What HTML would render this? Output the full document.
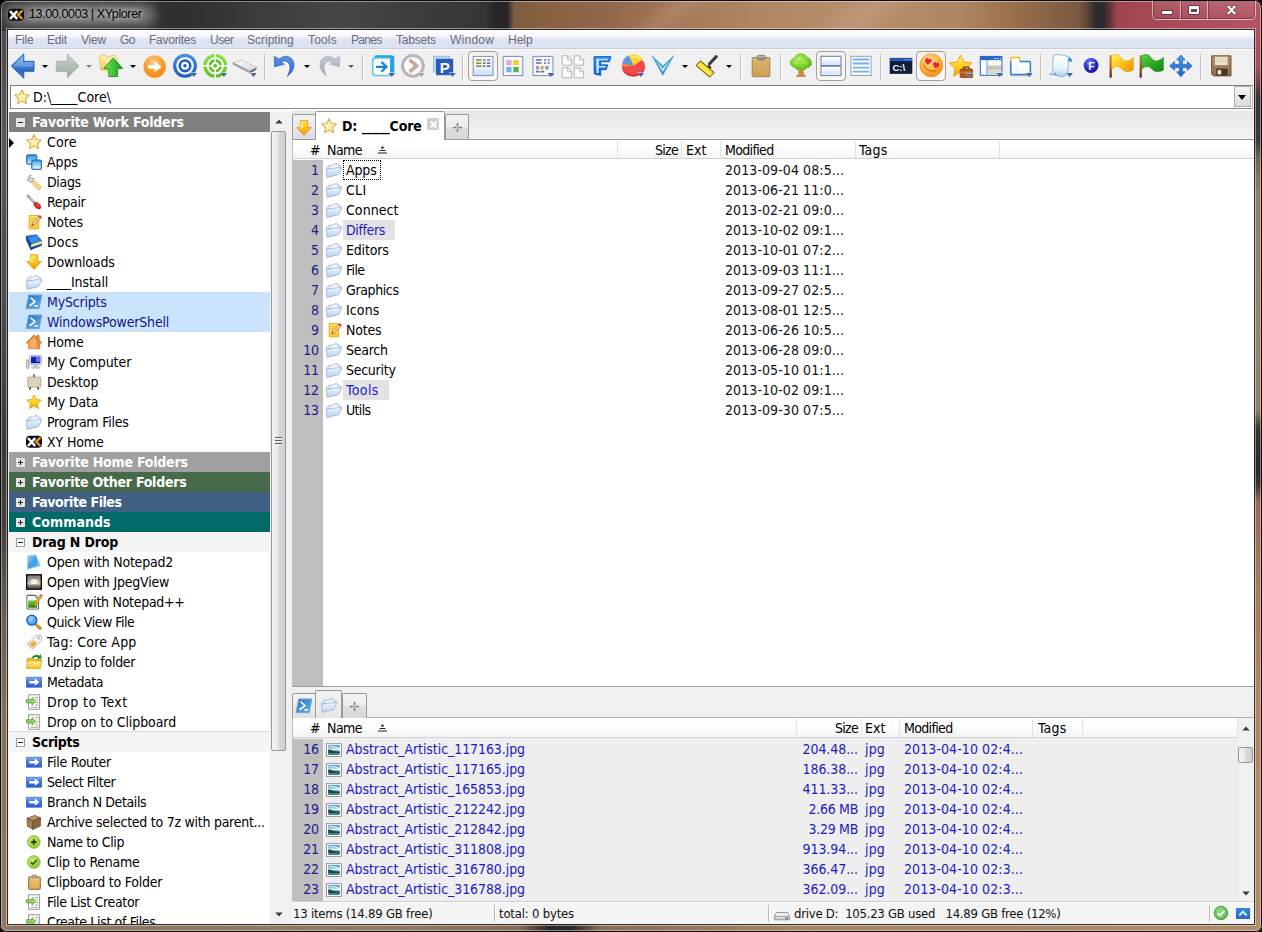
<!DOCTYPE html>
<html lang="en"><head><meta charset="utf-8"><title>13.00.0003 | XYplorer</title>
<style>
*{box-sizing:border-box}
html,body{margin:0;padding:0;background:#000;overflow:hidden}
body{width:1262px;height:932px;position:relative;font-family:'DejaVu Sans Condensed','Liberation Sans',sans-serif;font-size:14px;color:#000;line-height:20px;letter-spacing:-0.1px}
.a{position:absolute}
.t{position:absolute;white-space:pre;height:20px;line-height:20px}
svg{position:absolute;overflow:visible}
#frame{left:0;top:0;width:1262px;height:932px;border-radius:8px 8px 7px 7px;overflow:hidden;background:#444}
#ftop{left:0;top:0;width:1262px;height:31px;background:linear-gradient(90deg,#343336 0,#3b393d 60px,#2f2e31 180px,#3e3b40 260px,#48454a 340px,#3c3a3e 430px,#363538 485px,#272527 495px,#262426 507px,#7c5c44 514px,#86603f 540px,#90664a 600px,#a47858 680px,#b08664 760px,#b68e6c 860px,#ae8664 960px,#a07450 1000px,#8c6646 1040px,#7c5840 1078px,#5a4236 1088px,#2c2a2e 1096px,#2c2a2e 1104px,#6a343c 1111px,#a04450 1117px,#a84c59 1180px,#b35663 1262px)}
#fleft{left:0;top:26px;width:9px;height:906px;background:linear-gradient(180deg,#4e4c50 0,#58565a 120px,#4a484b 300px,#3a3839 420px,#46403c 500px,#6c6054 600px,#847260 700px,#8c7864 906px)}
#fright{left:1253px;top:26px;width:9px;height:906px;background:linear-gradient(180deg,#ad5360 0,#a54f5b 40px,#6a4248 58px,#3a3638 70px,#3c3a3a 115px,#6f6752 132px,#8a8064 165px,#93876a 300px,#8c7f63 385px,#3a3633 402px,#2a2828 440px,#3a302c 458px,#946c54 476px,#a47c60 560px,#ae8868 700px,#b08c6c 906px)}
#fbot{left:0;top:923px;width:1262px;height:9px;background:linear-gradient(90deg,#8c7864 0,#8e7862 200px,#947a62 400px,#866a54 520px,#2e2826 548px,#2e2826 572px,#8a6c56 600px,#a48264 800px,#b08c6c 1262px)}
#client{left:8px;top:30px;width:1246px;height:894px;background:#f0f0f0;overflow:hidden}
.hl{position:absolute;background:#808080}
.row{position:absolute;left:0;height:20px;width:100%}
.hd{position:absolute;left:1px;width:261px;height:20px;font-weight:bold;color:#fff}
.hd .t{left:23px;top:0}
.pm{position:absolute;left:7px;top:6px;width:9px;height:9px;background:#e4e4e4;background-image:linear-gradient(180deg,rgba(0,0,0,.08),rgba(255,255,255,.5))}
.pm:before{content:"";position:absolute;left:2px;top:4px;width:5px;height:1px;background:#222}
.pm.p:after{content:"";position:absolute;left:4px;top:2px;width:1px;height:5px;background:#222}
.num{position:absolute;left:0;width:26px;text-align:right;color:#1c1c8c;height:20px}
.mi{position:absolute;top:1px;height:19px;line-height:19px;font-family:'Liberation Sans',sans-serif;font-size:12px;color:#676d79;letter-spacing:-0.2px;white-space:pre}
.sep{position:absolute;top:24px;width:1px;height:26px;background:#c2c2c2;box-shadow:1px 0 0 #fdfdfd}
.dd{position:absolute;top:35px;width:0;height:0;border-left:3px solid transparent;border-right:3px solid transparent;border-top:3px solid #000}
.colsep{position:absolute;top:1px;width:1px;height:18px;background:#e2e2e2}
.ch{position:absolute;left:0;height:20px;background:linear-gradient(180deg,#fff 0,#fff 35%,#f2f3f5 100%);border-bottom:1px solid #d2d2d2}
.tab{position:absolute;border:1px solid #999;border-bottom:none;border-radius:2px 2px 0 0}
.st{position:absolute;top:0;height:21px;line-height:21px;font-size:13px;white-space:pre;color:#111;letter-spacing:0}
</style></head><body>
<div class="a" id="frame">
<div class="a" id="fleft"></div><div class="a" id="fright"></div><div class="a" id="fbot"></div><div class="a" id="ftop"></div>
<div class="a" style="left:520px;top:0;width:560px;height:30px;overflow:hidden;opacity:.5"><div class="a" style="left:120px;top:-30px;width:60px;height:90px;transform:skewX(-55deg);background:linear-gradient(90deg,rgba(255,235,215,0),rgba(255,235,215,.22),rgba(255,235,215,0))"></div><div class="a" style="left:300px;top:-30px;width:90px;height:90px;transform:skewX(-55deg);background:linear-gradient(90deg,rgba(255,235,215,0),rgba(255,235,215,.2),rgba(255,235,215,0))"></div></div>
<div class="a" style="left:0;top:0;width:1262px;height:932px;border-radius:8px 8px 7px 7px;border:1px solid #0c0c0c;"></div>
<div class="a" style="left:1px;top:1px;width:1260px;height:930px;border-radius:7px 7px 6px 6px;border:1px solid rgba(255,255,255,.42);"></div>
<div class="a" style="left:6px;top:28px;width:1250px;height:898px;border:1px solid rgba(255,255,255,.45)"></div>
<div class="a" style="left:7px;top:29px;width:1248px;height:896px;border:1px solid rgba(20,20,20,.75)"></div>
<div class="a" style="left:4px;top:4px;width:152px;height:22px;border-radius:11px;background:rgba(255,255,255,.30);filter:blur(5px)"></div>
<svg style="left:8px;top:7px" width="16" height="16" viewBox="0 0 16 16"><path d="M4 1.800h8a4 4 0 0 1 4 4v3.900a4 4 0 0 1-4 4H4a4 4 0 0 1-4-4V5.800a4 4 0 0 1 4-4z" fill="#0a0a0a"/><path d="M2 4l7.200 8M9.200 4L2 12" stroke="#fff" stroke-width="2.600"/><path d="M14.400 3.600L10 7.800l4.400 4" stroke="#e8981c" stroke-width="2.300" fill="none"/></svg>
<div class="t" style="left:29px;top:4px;font-family:'Liberation Sans',sans-serif;font-size:12.5px;letter-spacing:-0.379px;text-shadow:0 0 6px rgba(255,255,255,.9),0 0 10px rgba(255,255,255,.6)">13.00.0003 | XYplorer</div>
<div class="a" style="left:1152px;top:1px;width:104px;height:19px;border:1px solid rgba(255,255,255,.55);border-top:none;border-radius:0 0 5px 5px;box-shadow:inset 0 0 0 1px rgba(60,10,20,.35);background:linear-gradient(180deg,rgba(255,255,255,.12),rgba(255,255,255,.02))"></div>
<div class="a" style="left:1180px;top:1px;width:1px;height:18px;background:rgba(255,255,255,.5);box-shadow:1px 0 0 rgba(60,10,20,.35)"></div>
<div class="a" style="left:1207px;top:1px;width:1px;height:18px;background:rgba(255,255,255,.5);box-shadow:1px 0 0 rgba(60,10,20,.35)"></div>
<div class="a" style="left:1162px;top:11px;width:10px;height:3px;background:#fff;border-radius:1px;box-shadow:0 0 0 1px rgba(70,30,40,.6)"></div>
<div class="a" style="left:1189px;top:6px;width:10px;height:8px;border:2px solid #fff;border-top-width:3px;border-radius:1px;background:rgba(90,50,60,.7);box-shadow:0 0 0 1px rgba(70,30,40,.6)"></div>
<svg style="left:1225px;top:5px" width="13" height="10" viewBox="0 0 13 10"><path d="M.8 .5h3.600l2.100 2.600L8.600 .5h3.600L8.300 5l3.900 4.500H8.600L6.500 6.900 4.400 9.500H.8L4.700 5z" fill="#fff" stroke="rgba(70,30,40,.7)" stroke-width=".8"/></svg>
</div>
<div class="a" id="client">
<div class="a" style="left:0;top:0;width:1246px;height:19px;background:linear-gradient(180deg,#fefefe 0,#f4f5fa 36%,#e2e5f3 46%,#dcdff0 100%)"></div>
<div class="a" style="left:0;top:18px;width:1246px;height:1px;background:#c9cdd9"></div>
<div class="a" style="left:0;top:19px;width:1246px;height:1px;background:#fbfbfb"></div>
<div class="mi" style="left:7px;letter-spacing:-0.211px;">File</div>
<div class="mi" style="left:39px;letter-spacing:-0.172px;">Edit</div>
<div class="mi" style="left:73px;letter-spacing:-0.199px;">View</div>
<div class="mi" style="left:112px;letter-spacing:-0.508px;">Go</div>
<div class="mi" style="left:141px;letter-spacing:-0.262px;">Favorites</div>
<div class="mi" style="left:202px;letter-spacing:-0.461px;">User</div>
<div class="mi" style="left:239px;letter-spacing:0.001px;">Scripting</div>
<div class="mi" style="left:300px;letter-spacing:0.157px;">Tools</div>
<div class="mi" style="left:343px;letter-spacing:-0.666px;">Panes</div>
<div class="mi" style="left:388px;letter-spacing:-0.208px;">Tabsets</div>
<div class="mi" style="left:442px;letter-spacing:0.252px;">Window</div>
<div class="mi" style="left:500px;letter-spacing:0.003px;">Help</div>
<div class="a" style="left:460px;top:21px;width:30px;height:30px;border:1px solid #a8a098;border-radius:4px;background:linear-gradient(180deg,#f3f1ed,#f8f7f4)"></div><div class="a" style="left:808px;top:21px;width:30px;height:30px;border:1px solid #a8a098;border-radius:4px;background:linear-gradient(180deg,#f3f1ed,#f8f7f4)"></div><div class="a" style="left:908px;top:21px;width:30px;height:30px;border:1px solid #a8a098;border-radius:4px;background:linear-gradient(180deg,#f3f1ed,#f8f7f4)"></div><svg style="left:3px;top:24px" width="24" height="24" viewBox="0 0 24 24"><linearGradient id="g3" x1="0" y1="0" x2="0" y2="1"><stop offset="0" stop-color="#7ab4f0"/><stop offset="0.35" stop-color="#4a8ce0"/><stop offset="0.7" stop-color="#2a68c4"/><stop offset="1" stop-color="#3a7cd4"/></linearGradient><path d="M12.800 -.2L.3 11.900 12.800 24.200V17.300H23V7.300H12.800z" fill="url(#g3)" stroke="#1c4c9c" stroke-width=".8" stroke-linejoin="round"/><path d="M12 2.300L2.200 11.800l1 .9H22V8.200H12z" fill="#fff" opacity=".22"/></svg><svg style="left:48px;top:24px" width="24" height="24" viewBox="0 0 24 24"><linearGradient id="g5" x1="0" y1="0" x2="0" y2="1"><stop offset="0" stop-color="#d0d8d0"/><stop offset="0.5" stop-color="#b2beb4"/><stop offset="1" stop-color="#9aa69c"/></linearGradient><path d="M11.400 .2L23 12 11.400 23.800V17.300H.3V7.300H11.400z" fill="url(#g5)" stroke="#9ca89e" stroke-width=".8" stroke-linejoin="round"/></svg><svg style="left:91px;top:24px" width="24" height="24" viewBox="0 0 24 24"><linearGradient id="g7" x1="0" y1="0" x2="0" y2="1"><stop offset="0" stop-color="#fdf0a0"/><stop offset="1" stop-color="#ecc858"/></linearGradient><linearGradient id="g8" x1="0" y1="0" x2="1" y2="0"><stop offset="0" stop-color="#8ce468"/><stop offset="0.45" stop-color="#48c838"/><stop offset="1" stop-color="#189818"/></linearGradient><path d="M.5 3l1.500-2.500L7 1.500l1.200 1.800 6.800-2 3.600 3.500L17 17.500 1.800 16z" fill="url(#g7)" stroke="#dcc060" stroke-width=".8" stroke-linejoin="round"/><path d="M2.500 5.500L14 2.500l3 2.800L15.500 14z" fill="#fff8c8" opacity=".55"/><path d="M14.200 4L4.700 14.500h5.100V22.500h8.800V14.500h5.100z" fill="url(#g8)" stroke="#1c8c1c" stroke-width=".9" stroke-linejoin="round"/></svg><svg style="left:135px;top:24px" width="24" height="24" viewBox="0 0 24 24"><radialGradient id="g9" cx="0.45" cy="0.3" r="0.8"><stop offset="0" stop-color="#ffcc88"/><stop offset="0.55" stop-color="#fa9a28"/><stop offset="1" stop-color="#ee7e0c"/></radialGradient><circle cx="11.700" cy="12.700" r="11" fill="url(#g9)" stroke="#f4a850" stroke-width=".7"/><path d="M5 10.900h6.500V7.200l7 5.500-7 5.500v-3.700H5z" fill="#fff"/></svg><svg style="left:165px;top:24px" width="24" height="24" viewBox="0 0 24 24"><linearGradient id="g11" x1="0" y1="0" x2="0" y2="1"><stop offset="0" stop-color="#4a8ce0"/><stop offset="1" stop-color="#1f5fc0"/></linearGradient><circle cx="12" cy="11.800" r="10.400" fill="#fff" stroke="url(#g11)" stroke-width="3.200"/><circle cx="12" cy="11.800" r="5.300" fill="#fff" stroke="#1f5fc0" stroke-width="2.600"/><circle cx="12" cy="11.800" r="1.700" fill="#1f5fc0"/><path d="M17.099999999999998 18.6h7.400l-3.700 4.400z" fill="#f4f4f4"/><path d="M17.5 19h6.600l-3.300 3.900z" fill="#46669c"/></svg><svg style="left:195px;top:24px" width="24" height="24" viewBox="0 0 24 24"><linearGradient id="g13" x1="0" y1="0" x2="0" y2="1"><stop offset="0" stop-color="#90e050"/><stop offset="1" stop-color="#5cc028"/></linearGradient><circle cx="12.200" cy="11.800" r="10.300" fill="#fff" stroke="url(#g13)" stroke-width="3.400"/><circle cx="12.200" cy="11.800" r="5.300" fill="#fff" stroke="#5cc028" stroke-width="2.800"/><path d="M12.200 -.5v24.600M-.2 11.800h24.800" stroke="#fff" stroke-width="1.500"/><circle cx="12.200" cy="11.800" r="1.900" fill="#5cc028"/><path d="M17.099999999999998 18.6h7.400l-3.700 4.400z" fill="#f4f4f4"/><path d="M17.5 19h6.600l-3.300 3.900z" fill="#46669c"/></svg><svg style="left:225px;top:24px" width="24" height="24" viewBox="0 0 24 24"><linearGradient id="g15" x1="0" y1="0" x2="0" y2="1"><stop offset="0" stop-color="#fafafa"/><stop offset="1" stop-color="#d4d6d8"/></linearGradient><path d="M0 8.800L8.500 6 23.500 13.500 16.500 17.200z" fill="url(#g15)" stroke="#b4b8bc" stroke-width=".7" stroke-linejoin="round"/><path d="M0 8.800l16.500 8.400 7-3.700v1.600l-7 3.900L0 10.300z" fill="#9ca0a6" stroke="#8c9096" stroke-width=".5" stroke-linejoin="round"/><path d="M17.300 18.300l5.400-3" stroke="#4a4e54" stroke-width="1.100"/><path d="M16.799999999999997 18.6h7.400l-3.700 4.400z" fill="#f4f4f4"/><path d="M17.2 19h6.600l-3.300 3.900z" fill="#46669c"/></svg><svg style="left:265px;top:24px" width="24" height="24" viewBox="0 0 24 24"><linearGradient id="g17" x1="0" y1="0" x2="0" y2="1"><stop offset="0" stop-color="#5a94e8"/><stop offset="1" stop-color="#2c60c4"/></linearGradient><path d="M1.200 2.200l.3 10.600 10-2.600-3.400-2c2.600-2 6.400-1.200 8 1.800 1.700 3.400.6 7.600-1.800 12.200 5-3.600 7.800-8.600 6.400-13.800C19 2.400 12.200 0 6.200 5z" fill="url(#g17)" stroke="#2c5cb8" stroke-width=".6" stroke-linejoin="round"/></svg><svg style="left:309px;top:24px" width="24" height="24" viewBox="0 0 24 24"><linearGradient id="g19" x1="0" y1="0" x2="0" y2="1"><stop offset="0" stop-color="#c4c8d2"/><stop offset="1" stop-color="#a0a6b2"/></linearGradient><path d="M22.800 2.200l-.3 10.600-10-2.600 3.400-2c-2.600-2-6.400-1.200-8 1.800-1.700 3.400-.6 7.600 1.800 11.800-5-3.400-7.800-8.200-6.400-13.400C5 2.400 11.800 0 17.800 5z" fill="url(#g19)" stroke="#a2a8b4" stroke-width=".6" stroke-linejoin="round"/></svg><svg style="left:363px;top:24px" width="24" height="24" viewBox="0 0 24 24"><path d="M4.500 1.300h15.800a3 3 0 0 1 3 3v14.200l-3 2.500V4.800H2z" fill="#1ea2e0"/><rect x="1.700" y="4" width="18.600" height="17.600" rx="3" fill="#fff" stroke="#5cc4ee" stroke-width="1.500"/><path d="M20.300 5v15" stroke="#1ea2e0" stroke-width="2.400"/><path d="M5 12.800h9M10.500 8l5 4.800-5 4.800" fill="none" stroke="#1c84d4" stroke-width="2.300"/><path d="M17.0 18.6h7.400l-3.700 4.400z" fill="#f4f4f4"/><path d="M17.400000000000002 19h6.600l-3.300 3.900z" fill="#46669c"/></svg><svg style="left:393px;top:24px" width="24" height="24" viewBox="0 0 24 24"><circle cx="11.900" cy="11.800" r="10.400" fill="#fbfbfb" stroke="#b6b6ba" stroke-width="3"/><path d="M8.600 5.800l7 6-7 6" fill="none" stroke="#c8a898" stroke-width="3.600"/><path d="M16.799999999999997 18.6h7.400l-3.700 4.400z" fill="#f4f4f4"/><path d="M17.2 19h6.600l-3.300 3.900z" fill="#a4a4a8"/></svg><svg style="left:424px;top:24px" width="24" height="24" viewBox="0 0 24 24"><rect x="1.600" y="2.200" width="15.800" height="15.800" fill="#bcd6f6" stroke="#8eb2e2" stroke-width=".8"/><rect x="4" y="4.800" width="17.200" height="16.400" fill="#2a5abc"/><text x="12.600" y="19" font-family="Liberation Sans,sans-serif" font-weight="bold" font-size="15" fill="#fff" text-anchor="middle">P</text><path d="M16.799999999999997 18.6h7.400l-3.700 4.400z" fill="#f4f4f4"/><path d="M17.2 19h6.600l-3.300 3.900z" fill="#46669c"/></svg><svg style="left:463px;top:24px" width="24" height="24" viewBox="0 0 24 24"><linearGradient id="g27" x1="0" y1="0" x2="0" y2="1"><stop offset="0" stop-color="#ffffff"/><stop offset="0.5" stop-color="#f0f5fd"/><stop offset="1" stop-color="#c8dcfa"/></linearGradient><rect x="2.200" y="2.400" width="19.800" height="19.200" fill="url(#g27)" stroke="#7a90b8" stroke-width="1"/><path d="M5 6h5.600" stroke="#8c9a34" stroke-width="1.700"/><path d="M12 6h2.600M16 6h3.400" stroke="#6a78a8" stroke-width="1.700"/><path d="M5 9.2h5.600" stroke="#8c9a34" stroke-width="1.700"/><path d="M12 9.2h2.600M16 9.2h3.400" stroke="#6a78a8" stroke-width="1.700"/><path d="M5 12.2h5.600" stroke="#8c9a34" stroke-width="1.700"/><path d="M12 12.2h2.600M16 12.2h3.400" stroke="#6a78a8" stroke-width="1.700"/></svg><svg style="left:493px;top:24px" width="24" height="24" viewBox="0 0 24 24"><rect x="2.200" y="2.400" width="19.600" height="19.200" fill="#f2f6fd" stroke="#7a90b8" stroke-width="1"/><rect x="5.300" y="6" width="5.200" height="5.200" fill="#e2a8d8"/><rect x="12.400" y="6" width="5.200" height="5.200" fill="#f0d020"/><rect x="5.300" y="13" width="5.200" height="5.200" fill="#78b0e8"/><rect x="12.400" y="13" width="5.200" height="5.200" fill="#58b040"/></svg><svg style="left:523px;top:24px" width="24" height="24" viewBox="0 0 24 24"><rect x="2" y="2.400" width="20" height="19.200" fill="#f4f7fd" stroke="#7a90b8" stroke-width="1"/><path d="M5 6h5.600M13 6h2M16.600 6h2" stroke="#6a7098" stroke-width="1.600"/><path d="M5 9h5.600M13 9h2M16.600 9h2" stroke="#6a7098" stroke-width="1.600"/><rect x="5" y="12" width="3" height="3.400" fill="#a48cd0"/><rect x="9.600" y="12" width="3" height="3.400" fill="#c8b040"/><rect x="14.200" y="12" width="3.400" height="3.400" fill="#8a9c8c"/><path d="M5 17.600h3.600M9.600 17.600h3.600" stroke="#6a7098" stroke-width="1.600"/><path d="M16.2 18.6h7.400l-3.700 4.400z" fill="#f4f4f4"/><path d="M16.6 19h6.600l-3.300 3.900z" fill="#46669c"/></svg><svg style="left:553px;top:24px" width="24" height="24" viewBox="0 0 24 24"><path d="M1.2 1.8h5.400l4 4v5.4h-9.400z" fill="#fdfdfd" stroke="#adadad" stroke-width=".9"/><path d="M6.6000000000000005 1.8v4h4" fill="none" stroke="#adadad" stroke-width=".8"/><path d="M13.2 1.8h5.400l4 4v5.4h-9.400z" fill="#fdfdfd" stroke="#adadad" stroke-width=".9"/><path d="M18.6 1.8v4h4" fill="none" stroke="#adadad" stroke-width=".8"/><path d="M1.2 13.8h5.400l4 4v6h-9.400z" fill="#fdfdfd" stroke="#adadad" stroke-width=".9"/><path d="M6.6000000000000005 13.8v4h4" fill="none" stroke="#adadad" stroke-width=".8"/><path d="M13.2 13.8h5.400l4 4v6h-9.400z" fill="#fdfdfd" stroke="#adadad" stroke-width=".9"/><path d="M18.6 13.8v4h4" fill="none" stroke="#adadad" stroke-width=".8"/></svg><svg style="left:583px;top:24px" width="24" height="24" viewBox="0 0 24 24"><linearGradient id="g35" x1="0" y1="0" x2="0" y2="1"><stop offset="0" stop-color="#2c8cf0"/><stop offset="1" stop-color="#0c5cc8"/></linearGradient><path d="M3 2.500h17l-1.600 5.300H9.800v3h7l-1.600 5H9.800v5.600L3.200 20z" fill="url(#g35)" stroke="#0c58c0" stroke-width=".8" stroke-linejoin="round"/><path d="M5.200 4.700h12l-.6 1.600H7.800v13l-2.400-.4z" fill="#d4f4ff" opacity=".9"/><path d="M7.800 12h7.200l-.5 1.500H7.800z" fill="#d4f4ff" opacity=".9"/></svg><svg style="left:613px;top:24px" width="24" height="24" viewBox="0 0 24 24"><ellipse cx="12.500" cy="13.500" rx="11.300" ry="9.200" fill="#d82c2c"/><ellipse cx="12.500" cy="11.800" rx="11.300" ry="9.200" fill="#f24848"/><path d="M12.500 11.800L1.500 9.500C2 5 5 2.500 8 1.800z" fill="#5a98e0"/><path d="M12.500 11.800L8 1.800C12-.5 19 .2 22 5.500z" fill="#f8d830"/><path d="M12.500 11.800L1.300 12.800 1.500 9.500z" fill="#f09038"/><path d="M10 3.500c3-1.200 7-.8 9.500 1.500" stroke="#fff6a0" stroke-width="1.200" fill="none" opacity=".7"/><path d="M16.2 18.6h7.400l-3.700 4.400z" fill="#f4f4f4"/><path d="M16.6 19h6.600l-3.300 3.900z" fill="#46669c"/></svg><svg style="left:643px;top:24px" width="24" height="24" viewBox="0 0 24 24"><linearGradient id="g39" x1="0" y1="0" x2="0" y2="1"><stop offset="0" stop-color="#4cc0e0"/><stop offset="1" stop-color="#2c88c8"/></linearGradient><path d="M1 1.800l10.800 19.400L22.600 1.800 11.800 12z" fill="url(#g39)" stroke="#3ca0d0" stroke-width=".7" stroke-linejoin="round"/><path d="M5.500 7.500l6.300 10.500 6.300-10.500-6.300 7z" fill="#e8fbff" opacity=".85"/></svg><svg style="left:687px;top:24px" width="24" height="24" viewBox="0 0 24 24"><path d="M14.500 9.800l6.800-7.200" stroke="#3a3a3c" stroke-width="3" stroke-linecap="round"/><path d="M12.800 11.500l3.200 2.600" stroke="#3a3a3c" stroke-width="2.200"/><path d="M1 11.500l4.600-4.600L19.200 18.500l-4.600 4.600z" fill="#f2d414" stroke="#544a10" stroke-width="1" stroke-linejoin="round"/><path d="M3 11.300l2-2 12 10.200-2 2z" fill="#fff27a" opacity=".75"/></svg><svg style="left:741px;top:24px" width="24" height="24" viewBox="0 0 24 24"><linearGradient id="g43" x1="0" y1="0" x2="0" y2="1"><stop offset="0" stop-color="#dcb670"/><stop offset="1" stop-color="#caa054"/></linearGradient><rect x="3.200" y="3.500" width="17.600" height="19.200" rx="1" fill="url(#g43)" stroke="#a8823c" stroke-width="1"/><rect x="8.300" y="1.400" width="7.800" height="4.600" rx="1" fill="#b8b0b0" stroke="#7a7070" stroke-width=".8"/><path d="M9.500 4.500h5.400" stroke="#7a7070" stroke-width="1"/></svg><svg style="left:781px;top:24px" width="24" height="24" viewBox="0 0 24 24"><radialGradient id="g45" cx="0.4" cy="0.35" r="0.7"><stop offset="0" stop-color="#b4ec5c"/><stop offset="0.65" stop-color="#7cd02c"/><stop offset="1" stop-color="#58ac1c"/></radialGradient><path d="M10 14.500h4l.3 5.700 2.700 2.300H7l2.700-2.300z" fill="#cc8c34" stroke="#a06820" stroke-width=".5"/><path d="M12.200 -.2c2.800 0 4.800 1.400 5.300 3.400 3 .4 5.200 2.800 4.800 5.400.8 2.600-1.600 5.200-4.600 5.200-1.200 2.200-4 2.800-5.800 1.400-2.200 1.400-5.200.4-5.800-1.800C3.300 13 1 10.800 1.200 8.200c.2-2.200 2-3.800 4.200-4 .6-2.600 3.600-4.400 6.800-4.400z" fill="url(#g45)" stroke="#68b824" stroke-width=".7"/><path d="M8 5c1.500-1.800 4.500-2.200 6.500-.6M5 9.500c1.200-1 2.800-1 4 0M13.500 9c1.500-1.300 3.800-1.200 5.200.2" stroke="#c8f480" stroke-width="1" fill="none" opacity=".8"/></svg><svg style="left:811px;top:24px" width="24" height="24" viewBox="0 0 24 24"><linearGradient id="g47" x1="0" y1="0" x2="0" y2="1"><stop offset="0" stop-color="#ffffff"/><stop offset="1" stop-color="#d0e2fa"/></linearGradient><rect x="2" y="2.300" width="20" height="19.200" fill="#fff" stroke="#6a84b0" stroke-width="1.100"/><rect x="3.200" y="3.500" width="17.600" height="7.400" fill="url(#g47)"/><rect x="3.200" y="13.200" width="17.600" height="7.200" fill="url(#g47)"/><path d="M2 11.900h20" stroke="#6a84b0" stroke-width="1.800"/></svg><svg style="left:841px;top:24px" width="24" height="24" viewBox="0 0 24 24"><rect x="2" y="2.300" width="20" height="19.200" fill="#fdfeff" stroke="#8aa0c8" stroke-width="1"/><path d="M3.800 5.500h16.400M3.800 9.500h16.400M3.800 13.600h16.400M3.800 17.600h16.400" stroke="#78aef0" stroke-width="1.900"/></svg><svg style="left:881px;top:24px" width="24" height="24" viewBox="0 0 24 24"><rect x="1" y="4.200" width="22" height="15.400" fill="#101c38" stroke="#0c1630" stroke-width=".6"/><rect x="1" y="4.200" width="22" height="3" fill="#2858c0"/><path d="M15.500 5.700h1.600M18 5.700h1.600M20.500 5.700h1.600" stroke="#8cbcf4" stroke-width="1.100"/><text x="3.600" y="16.800" font-family="Liberation Sans,sans-serif" font-weight="bold" font-size="9.500" fill="#fff">C:\</text></svg><svg style="left:911px;top:24px" width="24" height="24" viewBox="0 0 24 24"><radialGradient id="g53" cx="0.42" cy="0.3" r="0.8"><stop offset="0" stop-color="#ffe098"/><stop offset="0.55" stop-color="#fcac38"/><stop offset="1" stop-color="#f08414"/></radialGradient><circle cx="12.300" cy="11.300" r="11.500" fill="url(#g53)" stroke="#ec8c28" stroke-width=".6"/><path d="M6.300 5.800c.6-2 3-1.800 3.400-.2.800-1.200 3-.8 3 1 0 1.800-2.400 3-4 4-1.400-1.400-2.900-2.800-2.400-4.800z" fill="#ee1c30"/><path d="M14.200 9.600c.6-1.800 2.800-1.600 3.200-.2.800-1 2.800-.6 2.800 1 0 1.700-2.200 2.800-3.800 3.700-1.300-1.300-2.700-2.600-2.200-4.500z" fill="#ee1c30"/><path d="M4.800 10.500c1.500 5 6.500 8 12.800 6" fill="none" stroke="#c45c10" stroke-width="1"/></svg><svg style="left:940px;top:24px" width="24" height="24" viewBox="0 0 24 24"><linearGradient id="g55" x1="0" y1="0" x2="0" y2="1"><stop offset="0" stop-color="#fff27a"/><stop offset="0.55" stop-color="#fcd01c"/><stop offset="1" stop-color="#f4a408"/></linearGradient><path d="M12.500 1l3.400 7 7.800.9-5.800 5.300 1.600 7.800-7-4-7 4 1.600-7.800L1.300 8.900l7.800-.9z" fill="url(#g55)" stroke="#eca020" stroke-width="1" stroke-linejoin="round"/><rect x="12.200" y="15" width="12.400" height="8.600" rx="1.200" fill="#b0581c" stroke="#7c3c10" stroke-width=".8"/><path d="M15.800 15v-1.900h5.200V15" fill="none" stroke="#7c3c10" stroke-width="1.300"/><path d="M12.400 18.300h12" stroke="#d88c4c" stroke-width=".9"/><path d="M17.4 19.0h7.400l-3.700 4.400z" fill="#f4f4f4"/><path d="M17.8 19.4h6.600l-3.300 3.900z" fill="#46669c"/></svg><svg style="left:971px;top:24px" width="24" height="24" viewBox="0 0 24 24"><rect x="1.300" y="2.500" width="21.600" height="18.800" fill="#fff" stroke="#2a68c8" stroke-width="1.100"/><rect x="1.800" y="3" width="20.600" height="3.200" fill="#2a68c8"/><path d="M15 4.600h2M18 4.600h2M21 4.600h.8" stroke="#a8d0f8" stroke-width="1.100"/><rect x="8.600" y="7.200" width="13.600" height="4.200" fill="#f8f8f6"/><rect x="8.600" y="11.400" width="13.600" height="4.600" fill="#c8c8b8"/><rect x="8.600" y="16.300" width="13.600" height="4.400" fill="#d8d8d0"/><path d="M8 6.500v14.500" stroke="#5a8cd8" stroke-width="1"/><path d="M17.0 18.6h7.400l-3.700 4.400z" fill="#f4f4f4"/><path d="M17.400000000000002 19h6.600l-3.300 3.900z" fill="#46669c"/></svg><svg style="left:1001px;top:24px" width="24" height="24" viewBox="0 0 24 24"><path d="M2.200 21.600h19.500" stroke="#c4c4c4" stroke-width="1.400"/><path d="M1.800 20V4.600a1.200 1.200 0 0 1 1.200-1.200h6.600a1.200 1.200 0 0 1 1.200 1.200V7" fill="#fffdf4" stroke="#f0b830" stroke-width="1.500"/><path d="M1.800 7.500V20.400h19.600V8.600a1.200 1.200 0 0 0-1.200-1.200H10.800" fill="#fafdff" stroke="#2a80d0" stroke-width="1.500" stroke-linejoin="round"/><path d="M16.7 18.6h7.400l-3.700 4.400z" fill="#f4f4f4"/><path d="M17.1 19h6.600l-3.300 3.900z" fill="#46669c"/></svg><svg style="left:1041px;top:24px" width="24" height="24" viewBox="0 0 24 24"><linearGradient id="g61" x1="0" y1="0" x2="0" y2="1"><stop offset="0" stop-color="#ffffff"/><stop offset="0.6" stop-color="#e8f4fe"/><stop offset="1" stop-color="#a8d0f4"/></linearGradient><path d="M5 .8c5-.6 10 .2 14.500 2.200 2 .8 3.600 2.600 3.400 4.600l-4-.6c.6 4.500.3 9-1.200 13.600L12.500 23c-3.500-1.500-8-2.500-12-2.400 2.800-1.400 3.800-3.200 3.400-6C3.300 10.500 3.500 5.500 5 .8z" fill="url(#g61)" stroke="#7cb0e4" stroke-width=".9" stroke-linejoin="round"/><path d="M19.500 3c2 .8 3.600 2.600 3.400 4.600l-4-.6c.4-1.500.6-2.800.6-4z" fill="#3a88d8"/><path d="M.5 20.600c3 .4 5-.4 6-2.400l1 2.800z" fill="#5aa0e4"/><path d="M17.0 18.6h7.400l-3.700 4.400z" fill="#f4f4f4"/><path d="M17.400000000000002 19h6.600l-3.300 3.900z" fill="#46669c"/></svg><svg style="left:1071px;top:24px" width="24" height="24" viewBox="0 0 24 24"><radialGradient id="g63" cx="0.4" cy="0.3" r="0.85"><stop offset="0" stop-color="#7080ff"/><stop offset="0.55" stop-color="#2028c4"/><stop offset="1" stop-color="#101484"/></radialGradient><circle cx="12.100" cy="11.500" r="7.400" fill="url(#g63)"/><text x="12.300" y="15.500" font-family="Liberation Sans,sans-serif" font-weight="bold" font-size="10.500" fill="#fff" text-anchor="middle">F</text></svg><svg style="left:1101px;top:24px" width="24" height="24" viewBox="0 0 24 24"><linearGradient id="g65" x1="0" y1="0" x2="1" y2="1"><stop offset="0" stop-color="#fff264"/><stop offset="0.5" stop-color="#fcc414"/><stop offset="1" stop-color="#f08c04"/></linearGradient><linearGradient id="g66" x1="0" y1="0" x2="0" y2="1"><stop offset="0" stop-color="#d88838"/><stop offset="0.5" stop-color="#a85420"/><stop offset="1" stop-color="#5c2410"/></linearGradient><rect x=".6" y="1.200" width="2.200" height="22.400" fill="url(#g66)"/><path d="M2.600 2C5 0 9 0 11 2.500c2 2.500 4 4.500 6 4.500 2.500 0 5-1.500 7.400-3.500V16c-2.400 1.500-4.900 2-7.400 1.600-3-.6-5-4.600-8-5.200-2.500-.4-4.500 1.100-6.400 3.100z" fill="url(#g65)" stroke="#e8a010" stroke-width=".6" stroke-linejoin="round"/></svg><svg style="left:1131px;top:24px" width="24" height="24" viewBox="0 0 24 24"><linearGradient id="g67" x1="0" y1="0" x2="1" y2="1"><stop offset="0" stop-color="#5cd444"/><stop offset="0.5" stop-color="#2cac24"/><stop offset="1" stop-color="#148414"/></linearGradient><linearGradient id="g68" x1="0" y1="0" x2="0" y2="1"><stop offset="0" stop-color="#d88838"/><stop offset="0.5" stop-color="#a85420"/><stop offset="1" stop-color="#5c2410"/></linearGradient><rect x=".6" y="1.200" width="2.200" height="22.400" fill="url(#g68)"/><path d="M2.600 2C5 0 9 0 11 2.500c2 2.500 4 4.500 6 4.500 2.500 0 5-1.500 7.400-3.500V16c-2.400 1.500-4.900 2-7.400 1.600-3-.6-5-4.600-8-5.200-2.500-.4-4.500 1.100-6.400 3.100z" fill="url(#g67)" stroke="#1c8c1c" stroke-width=".6" stroke-linejoin="round"/></svg><svg style="left:1161px;top:24px" width="24" height="24" viewBox="0 0 24 24"><linearGradient id="g69" x1="0" y1="0" x2="0" y2="1"><stop offset="0" stop-color="#4c9cec"/><stop offset="1" stop-color="#1c64c4"/></linearGradient><path d="M11.900 1l4.300 5h-2.800v4.400h4.800V7.600l5 4.300-5 4.300v-2.800h-4.800v4.400h2.800l-4.300 5-4.300-5h2.800v-4.400H5.600v2.800l-5-4.300 5-4.300v2.800h4.800V6H7.600z" fill="url(#g69)" stroke="#1c5cb8" stroke-width=".7" stroke-linejoin="round"/></svg><svg style="left:1202px;top:24px" width="24" height="24" viewBox="0 0 24 24"><linearGradient id="g71" x1="0" y1="0" x2="0" y2="1"><stop offset="0" stop-color="#aa8c6c"/><stop offset="1" stop-color="#8e6e4c"/></linearGradient><path d="M1.600 1.800h19.400v20.100H3.400L1.600 20z" fill="url(#g71)" stroke="#6a4c2c" stroke-width=".9" stroke-linejoin="round"/><rect x="4.600" y="2.300" width="13.400" height="9" fill="#ece0cc" stroke="#9a7a58" stroke-width=".6"/><path d="M5.500 5h11.600M5.500 7.500h11.600" stroke="#d8c8ac" stroke-width=".8"/><rect x="6.200" y="14.600" width="11.400" height="7" fill="#4c3420"/><rect x="7.600" y="16" width="3.600" height="4.400" fill="#f0e8d8"/></svg><div class="sep" style="left:256px"></div><div class="sep" style="left:354px"></div><div class="sep" style="left:454px"></div><div class="sep" style="left:732px"></div><div class="sep" style="left:772px"></div><div class="sep" style="left:872px"></div><div class="sep" style="left:1032px"></div><div class="sep" style="left:1192px"></div><div class="dd" style="left:34px;border-top-color:#000"></div><div class="dd" style="left:78px;border-top-color:#808080"></div><div class="dd" style="left:122px;border-top-color:#000"></div><div class="dd" style="left:296px;border-top-color:#000"></div><div class="dd" style="left:340px;border-top-color:#606060"></div><div class="dd" style="left:674px;border-top-color:#000"></div><div class="dd" style="left:718px;border-top-color:#000"></div>
<div class="a" style="left:2px;top:55px;width:1243px;height:24px;background:#fff;border:1px solid #7f7f7f;border-right-color:#b8b8b8;border-bottom-color:#8a8a8a"></div>
<svg style="left:6px;top:58.5px" width="16" height="16" viewBox="0 0 16 16"><linearGradient id="g73" x1="0" y1="0" x2="0" y2="1"><stop offset="0" stop-color="#fffbdc"/><stop offset="1" stop-color="#fde78c"/></linearGradient><path d="M8 .8l2.2 4.7 5 .6-3.7 3.5 1 5L8 12.100l-4.500 2.500 1-5L.8 6.100l5-.6z" fill="url(#g73)" stroke="#d9a93c" stroke-width="1.05" stroke-linejoin="round"/></svg>
<div class="t" style="left:25px;top:57px;letter-spacing:0">D:\<span style="display:inline-block;transform:scaleX(1.397);transform-origin:0 50%;margin-right:7.50px;letter-spacing:0">___</span>Core\</div>
<div class="a" style="left:1226px;top:56px;width:17px;height:21px;background:linear-gradient(180deg,#f4f4f4,#dcdcdc);border:1px solid #b0b0b0"></div>
<div class="a" style="left:1230px;top:65px;width:0;height:0;border-left:4.5px solid transparent;border-right:4.5px solid transparent;border-top:5px solid #000"></div>
<div class="a" style="left:0;top:79px;width:1246px;height:3px;background:#fafafa"></div>
<div class="a" style="left:1px;top:82px;width:261px;height:812px;background:#fff;overflow:hidden">
<div class="hd" style="left:0;top:0px;background:#808080;color:#fff"><span class="pm" style="background:#e4e4e4"></span><span class="t" style="letter-spacing:-0.197px;">Favorite Work Folders</span></div>
<div class="row" style="top:20px;"><svg style="left:17px;top:2px" width="16" height="16" viewBox="0 0 16 16"><linearGradient id="g75" x1="0" y1="0" x2="0" y2="1"><stop offset="0" stop-color="#fffbdc"/><stop offset="1" stop-color="#fde78c"/></linearGradient><path d="M8 .8l2.2 4.7 5 .6-3.7 3.5 1 5L8 12.100l-4.500 2.500 1-5L.8 6.100l5-.6z" fill="url(#g75)" stroke="#d9a93c" stroke-width="1.05" stroke-linejoin="round"/></svg><span class="t" style="left:38px;letter-spacing:0.094px;">Core</span></div>
<div class="row" style="top:40px;"><svg style="left:17px;top:2px" width="16" height="16" viewBox="0 0 16 16"><linearGradient id="g77" x1="0" y1="0" x2="0" y2="1"><stop offset="0" stop-color="#2a86d2"/><stop offset="0.35" stop-color="#6ab0e6"/><stop offset="1" stop-color="#e4f2fc"/></linearGradient><linearGradient id="g78" x1="0" y1="0" x2="0" y2="1"><stop offset="0" stop-color="#2a86d2"/><stop offset="0.3" stop-color="#7abcec"/><stop offset="1" stop-color="#ffffff"/></linearGradient><rect x=".7" y=".9" width="10" height="9.300" rx="1.400" fill="url(#g77)" stroke="#1c74c4" stroke-width="1.200"/><rect x="5.800" y="6" width="9.600" height="9.300" rx="1.400" fill="url(#g78)" stroke="#1c74c4" stroke-width="1.200"/></svg><span class="t" style="left:38px;letter-spacing:-0.093px;">Apps</span></div>
<div class="row" style="top:60px;"><svg style="left:17px;top:2px" width="16" height="16" viewBox="0 0 16 16"><path d="M7.300 6.300l6.900 5.700a2 2 0 0 1-2.600 3L5.300 8.600z" fill="#fad68c" stroke="#e0a444" stroke-width=".9" stroke-linejoin="round"/><path d="M2.200 2.800a3.200 3.200 0 0 1 3-1.600L4.300 3.500l1.300 1.300 2.300-.9a3.200 3.200 0 0 1-3.500 4A3.300 3.300 0 0 1 1.200 5l2.100.3.700-1.400z" fill="#dfe3e8" stroke="#8e949c" stroke-width=".8" stroke-linejoin="round"/></svg><span class="t" style="left:38px;letter-spacing:-0.337px;">Diags</span></div>
<div class="row" style="top:80px;"><svg style="left:17px;top:2px" width="16" height="16" viewBox="0 0 16 16"><path d="M2.400 2.400l6.300 6.500" stroke="#80868e" stroke-width="2.100" stroke-linecap="round"/><path d="M2.600 2.600l6 6.200" stroke="#f4f4f6" stroke-width=".8"/><circle cx="2" cy="2" r="1.100" fill="#fff" stroke="#70767e" stroke-width=".7"/><ellipse cx="11.400" cy="11.700" rx="4" ry="2.300" transform="rotate(42 11.400 11.700)" fill="#e81c1c" stroke="#b41414" stroke-width=".7"/><ellipse cx="11.700" cy="10.900" rx="2.300" ry=".7" transform="rotate(42 11.700 10.900)" fill="#ff7a6a" opacity=".7"/></svg><span class="t" style="left:38px;letter-spacing:-0.294px;">Repair</span></div>
<div class="row" style="top:100px;"><svg style="left:17px;top:2px" width="16" height="16" viewBox="0 0 16 16"><linearGradient id="g83" x1="0" y1="0" x2="0" y2="1"><stop offset="0" stop-color="#ffe868"/><stop offset="1" stop-color="#fccc30"/></linearGradient><path d="M3.200 1.600h9.500v13.200H3.200z" fill="url(#g83)" stroke="#e4a81c" stroke-width="1"/><path d="M4.800 4.300h4.500M4.800 6.800h2.500M4.800 12.500h6" stroke="#e8b838" stroke-width="1"/><path d="M5.800 11.500l1-2.700 6.600-6.900 1.800 1.700-6.700 7z" fill="#f8dcb0" stroke="#b8602a" stroke-width=".8" stroke-linejoin="round"/><path d="M12.500 2.800l1.500-1.600 1.800 1.800-1.500 1.600z" fill="#d83444"/><path d="M5.800 11.500l.5-1.400.9.900z" fill="#333"/></svg><span class="t" style="left:38px;letter-spacing:-0.095px;">Notes</span></div>
<div class="row" style="top:120px;"><svg style="left:17px;top:2px" width="16" height="16" viewBox="0 0 16 16"><linearGradient id="g85" x1="0" y1="0" x2="1" y2="1"><stop offset="0" stop-color="#1c64d4"/><stop offset="0.5" stop-color="#3a98f0"/><stop offset="1" stop-color="#1458c4"/></linearGradient><path d="M.3 2.200L10.500.8 15.800 7 5.400 10.400z" fill="url(#g85)" stroke="#0c44a8" stroke-width=".7" stroke-linejoin="round"/><path d="M.3 2.200l5.100 8.200-.6 5.300L.5 6.300z" fill="#0c40a8" stroke="#0a3490" stroke-width=".6" stroke-linejoin="round"/><path d="M5.400 10.400L15.800 7v2.900L5.100 13.600z" fill="#fff6b8" stroke="#c8b050" stroke-width=".5"/><path d="M5.300 11.800L15.800 8.300" stroke="#e0c860" stroke-width=".6"/><path d="M5.100 13.600l10.700-3.700-.3 1.600-10.700 4.200z" fill="#0c40a8" stroke="#0a3490" stroke-width=".5" stroke-linejoin="round"/></svg><span class="t" style="left:38px;letter-spacing:0.148px;">Docs</span></div>
<div class="row" style="top:140px;"><svg style="left:17px;top:2px" width="16" height="16" viewBox="0 0 16 16"><linearGradient id="g87" x1="0" y1="0" x2="0" y2="1"><stop offset="0" stop-color="#ffe448"/><stop offset="0.5" stop-color="#fcc418"/><stop offset="1" stop-color="#f69408"/></linearGradient><path d="M4.400 .7h7.200v6.800h3.700L8 15.300.7 7.500h3.700z" fill="url(#g87)" stroke="#e89c10" stroke-width=".9" stroke-linejoin="round"/><path d="M5.300 1.600h2v6.800H3.500z" fill="#fff8a0" opacity=".5"/></svg><span class="t" style="left:38px;letter-spacing:-0.176px;">Downloads</span></div>
<div class="row" style="top:160px;"><svg style="left:17px;top:2px" width="16" height="16" viewBox="0 0 16 16"><linearGradient id="g89" x1="0" y1="0" x2="0" y2="1"><stop offset="0" stop-color="#eef4fc"/><stop offset="1" stop-color="#b8d0f0"/></linearGradient><path d="M.5 6.800l1.800-3 3.200-1.300 1.300 1.200L10 1l5.600 4-2.600 2z" fill="#dbe7f6" stroke="#a2bcdc" stroke-width=".8" stroke-linejoin="round"/><path d="M3.300 5.600l6.500-3.200 4 3-5.800 3.400z" fill="#fff" stroke="#c0d0e6" stroke-width=".6" stroke-linejoin="round"/><path d="M.4 7.300l11-1.700 4.400.5-3.300 6.500L1.200 15.400z" fill="url(#g89)" stroke="#92b0d8" stroke-width=".8" stroke-linejoin="round"/></svg><span class="t" style="left:38px;letter-spacing:-0.1px;"><span style="display:inline-block;transform:scaleX(1.270);transform-origin:0 50%;margin-right:5.10px;letter-spacing:0">___</span>Install</span></div>
<div class="row" style="top:180px;background:#cce4fb;"><svg style="left:17px;top:2px" width="16" height="16" viewBox="0 0 16 16"><linearGradient id="g91" x1="0" y1="0" x2="1" y2="1"><stop offset="0" stop-color="#2474bc"/><stop offset="1" stop-color="#62b0ea"/></linearGradient><path d="M2.800 1h13l-2.700 13.600H0z" fill="url(#g91)" stroke="#8ec0ea" stroke-width="1" stroke-linejoin="round"/><path d="M2.800 1h13l-2.700 13.600H0z" fill="none" stroke="#3a7cc0" stroke-width=".4" stroke-linejoin="round"/><path d="M5 4l4 3.600L4 11.500" fill="none" stroke="#fff" stroke-width="1.600" stroke-linejoin="round" stroke-linecap="round"/><path d="M8.300 11.800h3.700" stroke="#fff" stroke-width="1.600"/></svg><span class="t" style="left:38px;color:#14148c;letter-spacing:-0.202px;">MyScripts</span></div>
<div class="row" style="top:200px;background:#cce4fb;"><svg style="left:17px;top:2px" width="16" height="16" viewBox="0 0 16 16"><linearGradient id="g93" x1="0" y1="0" x2="1" y2="1"><stop offset="0" stop-color="#2474bc"/><stop offset="1" stop-color="#62b0ea"/></linearGradient><path d="M2.800 1h13l-2.700 13.600H0z" fill="url(#g93)" stroke="#8ec0ea" stroke-width="1" stroke-linejoin="round"/><path d="M2.800 1h13l-2.700 13.600H0z" fill="none" stroke="#3a7cc0" stroke-width=".4" stroke-linejoin="round"/><path d="M5 4l4 3.600L4 11.500" fill="none" stroke="#fff" stroke-width="1.600" stroke-linejoin="round" stroke-linecap="round"/><path d="M8.300 11.800h3.700" stroke="#fff" stroke-width="1.600"/></svg><span class="t" style="left:38px;color:#14148c;letter-spacing:-0.163px;">WindowsPowerShell</span></div>
<div class="row" style="top:220px;"><svg style="left:17px;top:2px" width="16" height="16" viewBox="0 0 16 16"><linearGradient id="g95" x1="0" y1="0" x2="1" y2="0"><stop offset="0" stop-color="#f0a050"/><stop offset="0.5" stop-color="#f4b470"/><stop offset="1" stop-color="#dc802c"/></linearGradient><path d="M10.800 1.200h2.400v5h-2.400z" fill="#e08838" stroke="#c87024" stroke-width=".5"/><path d="M2.400 8.500v6.200h11.400V8.500L8 2.500z" fill="url(#g95)" stroke="#cc7828" stroke-width=".7"/><path d="M.8 8.800L8 1.500l7.200 7.300" fill="none" stroke="#dc8030" stroke-width="1.700" stroke-linejoin="round" stroke-linecap="round"/></svg><span class="t" style="left:38px;letter-spacing:-0.176px;">Home</span></div>
<div class="row" style="top:240px;"><svg style="left:17px;top:2px" width="16" height="16" viewBox="0 0 16 16"><linearGradient id="g97" x1="0" y1="0" x2="0" y2="1"><stop offset="0" stop-color="#1428d0"/><stop offset="1" stop-color="#0a1498"/></linearGradient><rect x="3.700" y="1.400" width="11.700" height="9.200" rx=".8" fill="#e4e8f0" stroke="#9aa2b4" stroke-width=".8"/><rect x="5" y="2.600" width="9.200" height="6.600" fill="url(#g97)"/><path d="M10 2.600h4.200v5.400H10z" fill="#6c90f4" opacity=".75"/><path d="M7.800 10.600h3.600l.8 2.400H7z" fill="#c4c8d4"/><path d="M5.500 13h8.500v1.300H5.500z" fill="#d8dce4" stroke="#9aa2b4" stroke-width=".5"/><rect x=".6" y="5.800" width="2.100" height="8.600" rx=".4" fill="#d4d8e0" stroke="#8a92a4" stroke-width=".7"/></svg><span class="t" style="left:38px;letter-spacing:-0.058px;">My Computer</span></div>
<div class="row" style="top:260px;"><svg style="left:17px;top:2px" width="16" height="16" viewBox="0 0 16 16"><path d="M7.300 .6h1.500v2.800H7.300z" fill="#3a3a3a"/><path d="M4.700 13l-1.300 2.500M11.400 13l1.300 2.500" stroke="#1a1a1a" stroke-width="1.400"/><rect x="1.800" y="3.200" width="13" height="9.800" rx=".5" fill="#ddd2ba" stroke="#b0a488" stroke-width=".9"/></svg><span class="t" style="left:38px;letter-spacing:-0.079px;">Desktop</span></div>
<div class="row" style="top:280px;"><svg style="left:17px;top:2px" width="16" height="16" viewBox="0 0 16 16"><linearGradient id="g101" x1="0" y1="0" x2="0" y2="1"><stop offset="0" stop-color="#fff068"/><stop offset="0.55" stop-color="#fcd01c"/><stop offset="1" stop-color="#f09808"/></linearGradient><path d="M8 .8l2.2 4.7 5 .6-3.7 3.5 1 5L8 12.100l-4.500 2.500 1-5L.8 6.100l5-.6z" fill="url(#g101)" stroke="#e0a020" stroke-width=".9" stroke-linejoin="round"/></svg><span class="t" style="left:38px;letter-spacing:-0.142px;">My Data</span></div>
<div class="row" style="top:300px;"><svg style="left:17px;top:2px" width="16" height="16" viewBox="0 0 16 16"><linearGradient id="g103" x1="0" y1="0" x2="0" y2="1"><stop offset="0" stop-color="#eef4fc"/><stop offset="1" stop-color="#b8d0f0"/></linearGradient><path d="M.5 6.800l1.800-3 3.200-1.300 1.300 1.200L10 1l5.600 4-2.600 2z" fill="#dbe7f6" stroke="#a2bcdc" stroke-width=".8" stroke-linejoin="round"/><path d="M3.300 5.600l6.500-3.200 4 3-5.800 3.400z" fill="#fff" stroke="#c0d0e6" stroke-width=".6" stroke-linejoin="round"/><path d="M.4 7.300l11-1.700 4.400.5-3.300 6.500L1.200 15.400z" fill="url(#g103)" stroke="#92b0d8" stroke-width=".8" stroke-linejoin="round"/></svg><span class="t" style="left:38px;letter-spacing:-0.240px;">Program Files</span></div>
<div class="row" style="top:320px;"><svg style="left:17px;top:2px" width="16" height="16" viewBox="0 0 16 16"><path d="M4 1.800h8a4 4 0 0 1 4 4v3.900a4 4 0 0 1-4 4H4a4 4 0 0 1-4-4V5.800a4 4 0 0 1 4-4z" fill="#0a0a0a"/><path d="M2 4l7.200 8M9.200 4L2 12" stroke="#fff" stroke-width="2.600"/><path d="M14.400 3.600L10 7.800l4.400 4" stroke="#e8981c" stroke-width="2.300" fill="none"/></svg><span class="t" style="left:38px;letter-spacing:-0.147px;">XY Home</span></div>
<div class="a" style="left:0;top:26px;width:0;height:0;border-top:5px solid transparent;border-bottom:5px solid transparent;border-left:5px solid #000"></div>
<div class="hd" style="left:0;top:340px;background:#a0a0a0;color:#fff"><span class="pm p" style="background:#e4e4e4"></span><span class="t" style="letter-spacing:-0.212px;">Favorite Home Folders</span></div>
<div class="hd" style="left:0;top:360px;background:#466a4a;color:#fff"><span class="pm p" style="background:#e4e4e4"></span><span class="t" style="letter-spacing:-0.239px;">Favorite Other Folders</span></div>
<div class="hd" style="left:0;top:380px;background:#3f6083;color:#fff"><span class="pm p" style="background:#e4e4e4"></span><span class="t" style="letter-spacing:-0.458px;">Favorite Files</span></div>
<div class="hd" style="left:0;top:400px;background:#006a66;color:#fff"><span class="pm p" style="background:#e4e4e4"></span><span class="t" style="letter-spacing:0.070px;">Commands</span></div>
<div class="hd" style="left:0;top:420px;background:#f4f4f4;color:#000"><span class="pm" style="background:#fff;box-shadow:inset 0 0 0 1px #9a9a9a"></span><span class="t" style="letter-spacing:-0.149px;">Drag N Drop</span></div>
<div class="row" style="top:440px;"><svg style="left:17px;top:2px" width="16" height="16" viewBox="0 0 16 16"><linearGradient id="g107" x1="0" y1="0" x2="1" y2="1"><stop offset="0" stop-color="#9cd8f8"/><stop offset="0.5" stop-color="#3c9ce6"/><stop offset="1" stop-color="#74c0f2"/></linearGradient><path d="M1.600 1.500l8.400-.6 4.200 10.800L1.400 15.400z" fill="url(#g107)" stroke="#b0d8f2" stroke-width=".9" stroke-linejoin="round"/><path d="M10 .9l4.200 10.800-2 .6z" fill="#8cc8f0" opacity=".8"/></svg><span class="t" style="left:38px;letter-spacing:-0.217px;">Open with Notepad2</span></div>
<div class="row" style="top:460px;"><svg style="left:17px;top:2px" width="16" height="16" viewBox="0 0 16 16"><linearGradient id="g109" x1="0" y1="0" x2="0" y2="1"><stop offset="0" stop-color="#6e7276"/><stop offset="0.45" stop-color="#b4aca0"/><stop offset="0.62" stop-color="#d8ccb4"/><stop offset="0.8" stop-color="#6e685c"/><stop offset="1" stop-color="#56524a"/></linearGradient><rect x=".7" y=".8" width="14.600" height="14.400" fill="url(#g109)" stroke="#0c0c0c" stroke-width="1.400"/><ellipse cx="8.200" cy="7.500" rx="3.600" ry="2.600" fill="#fffbe8" opacity=".85"/></svg><span class="t" style="left:38px;letter-spacing:-0.194px;">Open with JpegView</span></div>
<div class="row" style="top:480px;"><svg style="left:17px;top:2px" width="16" height="16" viewBox="0 0 16 16"><linearGradient id="g111" x1="0" y1="0" x2="0" y2="1"><stop offset="0" stop-color="#7cd848"/><stop offset="1" stop-color="#1c7c10"/></linearGradient><path d="M.9 1.500h9l2.600 2.600v11H.9z" fill="#fdfdfd" stroke="#5a5a5a" stroke-width=".9" stroke-linejoin="round"/><path d="M2.500 1.300V.4M4.300 1.300V.4M6.100 1.300V.4M7.900 1.300V.4" stroke="#555" stroke-width=".9"/><path d="M9.900 1.500v2.600h2.600" fill="none" stroke="#5a5a5a" stroke-width=".7"/><path d="M2.200 6.300h9v7.400h-9z" fill="url(#g111)"/><path d="M7.600 13.200l.9-3 5.400-9 1.900 1.100-5.400 9z" fill="#f8b828" stroke="#8a5a1a" stroke-width=".6" stroke-linejoin="round"/><path d="M13.900 1.200l.6-1 1.900 1.100-.6 1z" fill="#d02020"/><path d="M7.600 13.200l.4-1.400 1 .6z" fill="#222"/></svg><span class="t" style="left:38px;letter-spacing:-0.285px;">Open with Notepad++</span></div>
<div class="row" style="top:500px;"><svg style="left:17px;top:2px" width="16" height="16" viewBox="0 0 16 16"><radialGradient id="g113" cx="0.4" cy="0.35" r="0.7"><stop offset="0" stop-color="#a8dcff"/><stop offset="0.6" stop-color="#58a8f8"/><stop offset="1" stop-color="#3a8cf0"/></radialGradient><path d="M9.500 10l4.800 4.300" stroke="#b88208" stroke-width="2.900" stroke-linecap="round"/><path d="M9.800 9.900l4.400 4" stroke="#e8bc38" stroke-width="1" stroke-linecap="round"/><circle cx="5.800" cy="6.200" r="5" fill="url(#g113)" stroke="#1c58d8" stroke-width="1.300"/></svg><span class="t" style="left:38px;letter-spacing:-0.470px;">Quick View File</span></div>
<div class="row" style="top:520px;"><svg style="left:17px;top:2px" width="16" height="16" viewBox="0 0 16 16"><linearGradient id="g115" x1="0" y1="0" x2="0" y2="1"><stop offset="0" stop-color="#ffffff"/><stop offset="1" stop-color="#dcdce4"/></linearGradient><path d="M.9 10.200L9.500 2l5.700-.8.300 5.300-8.800 8.600z" fill="url(#g115)" stroke="#b4b4c0" stroke-width=".9" stroke-linejoin="round"/><path d="M3.300 10.200l4.200-4 3.200 3.300-4.200 4z" fill="#f8a81c"/><path d="M4.300 10.200l3.200-3 1 1-3.200 3z" fill="#fcc860" opacity=".7"/><circle cx="12.600" cy="3.900" r="1.100" fill="#fff" stroke="#8a8a98" stroke-width=".7"/></svg><span class="t" style="left:38px;letter-spacing:0.188px;">Tag: Core App</span></div>
<div class="row" style="top:540px;"><svg style="left:17px;top:2px" width="16" height="16" viewBox="0 0 16 16"><linearGradient id="g117" x1="0" y1="0" x2="0" y2="1"><stop offset="0" stop-color="#fff0a0"/><stop offset="1" stop-color="#f8c024"/></linearGradient><path d="M.6 5.800l1-1.500h4.500l1 1.300h8.400v1.600H.6z" fill="#f4c430" stroke="#d4a010" stroke-width=".8" stroke-linejoin="round"/><path d="M.5 14.400L1.800 6.900h13.800l-1.300 7.500z" fill="url(#g117)" stroke="#d8a818" stroke-width=".8" stroke-linejoin="round"/><path d="M6.500 4.300a4.200 4.200 0 0 1 6.800-1.200" fill="none" stroke="#1c8a1c" stroke-width="2.100"/><path d="M11 5.200l4.800-.9-1.300-4.200z" fill="#1c8a1c"/></svg><span class="t" style="left:38px;letter-spacing:-0.288px;">Unzip to folder</span></div>
<div class="row" style="top:560px;"><svg style="left:17px;top:2px" width="16" height="16" viewBox="0 0 16 16"><linearGradient id="g119" x1="0" y1="0" x2="0" y2="1"><stop offset="0" stop-color="#8ab4f0"/><stop offset="0.45" stop-color="#3c74dc"/><stop offset="1" stop-color="#2c5cc8"/></linearGradient><rect x=".4" y="3.200" width="15.200" height="10" fill="url(#g119)" stroke="#3464c8" stroke-width=".7"/><path d="M3.200 6.900h5.600V4.600l4.700 3.600-4.700 3.600V9.500H3.200z" fill="#fff"/></svg><span class="t" style="left:38px;letter-spacing:-0.457px;">Metadata</span></div>
<div class="row" style="top:580px;"><svg style="left:17px;top:2px" width="16" height="16" viewBox="0 0 16 16"><path d="M2.600 .7h11v14.600h-11z" fill="#fcfcfc" stroke="#8a8e8a" stroke-width=".9"/><path d="M9 3.500h3.300M10.500 6h1.800M10.500 8.500h1.800M9 11h3.300M4.500 13.300h7.800" stroke="#9a9e9a" stroke-width=".9"/><path d="M9.900 7.300L6 3.600v2.100H.5v3.200H6V11z" fill="#98d468" stroke="#4c9c30" stroke-width=".8" stroke-linejoin="round"/></svg><span class="t" style="left:38px;letter-spacing:0.365px;">Drop to Text</span></div>
<div class="row" style="top:600px;"><svg style="left:17px;top:2px" width="16" height="16" viewBox="0 0 16 16"><path d="M2.600 .7h11v14.600h-11z" fill="#fcfcfc" stroke="#8a8e8a" stroke-width=".9"/><path d="M9 3.500h3.300M10.500 6h1.800M10.500 8.500h1.800M9 11h3.300M4.500 13.300h7.800" stroke="#9a9e9a" stroke-width=".9"/><path d="M9.900 7.300L6 3.600v2.100H.5v3.200H6V11z" fill="#98d468" stroke="#4c9c30" stroke-width=".8" stroke-linejoin="round"/></svg><span class="t" style="left:38px;letter-spacing:-0.083px;">Drop on to Clipboard</span></div>
<div class="a" style="left:0;top:619px;width:261px;height:1px;background:#dcdcdc"></div>
<div class="hd" style="left:0;top:620px;background:#f4f4f4;color:#000"><span class="pm" style="background:#fff;box-shadow:inset 0 0 0 1px #9a9a9a"></span><span class="t" style="letter-spacing:-0.301px;">Scripts</span></div>
<div class="row" style="top:640px;"><svg style="left:17px;top:2px" width="16" height="16" viewBox="0 0 16 16"><linearGradient id="g125" x1="0" y1="0" x2="0" y2="1"><stop offset="0" stop-color="#8ab4f0"/><stop offset="0.45" stop-color="#3c74dc"/><stop offset="1" stop-color="#2c5cc8"/></linearGradient><rect x=".4" y="3.200" width="15.200" height="10" fill="url(#g125)" stroke="#3464c8" stroke-width=".7"/><path d="M3.200 6.900h5.600V4.600l4.700 3.600-4.700 3.600V9.500H3.200z" fill="#fff"/></svg><span class="t" style="left:38px;letter-spacing:-0.241px;">File Router</span></div>
<div class="row" style="top:660px;"><svg style="left:17px;top:2px" width="16" height="16" viewBox="0 0 16 16"><linearGradient id="g127" x1="0" y1="0" x2="0" y2="1"><stop offset="0" stop-color="#8ab4f0"/><stop offset="0.45" stop-color="#3c74dc"/><stop offset="1" stop-color="#2c5cc8"/></linearGradient><rect x=".4" y="3.200" width="15.200" height="10" fill="url(#g127)" stroke="#3464c8" stroke-width=".7"/><path d="M3.200 6.900h5.600V4.600l4.700 3.600-4.700 3.600V9.500H3.200z" fill="#fff"/></svg><span class="t" style="left:38px;letter-spacing:-0.435px;">Select Filter</span></div>
<div class="row" style="top:680px;"><svg style="left:17px;top:2px" width="16" height="16" viewBox="0 0 16 16"><linearGradient id="g129" x1="0" y1="0" x2="0" y2="1"><stop offset="0" stop-color="#8ab4f0"/><stop offset="0.45" stop-color="#3c74dc"/><stop offset="1" stop-color="#2c5cc8"/></linearGradient><rect x=".4" y="3.200" width="15.200" height="10" fill="url(#g129)" stroke="#3464c8" stroke-width=".7"/><path d="M3.200 6.900h5.600V4.600l4.700 3.600-4.700 3.600V9.500H3.200z" fill="#fff"/></svg><span class="t" style="left:38px;letter-spacing:-0.395px;">Branch N Details</span></div>
<div class="row" style="top:700px;"><svg style="left:17px;top:2px" width="16" height="16" viewBox="0 0 16 16"><path d="M1 4.200L8.800 1.400l5.800 2.400L7 7z" fill="#c09868" stroke="#5c4228" stroke-width=".7" stroke-linejoin="round"/><path d="M1 4.200L7 7v8.400l-5.600-3.200z" fill="#a88050" stroke="#5c4228" stroke-width=".7" stroke-linejoin="round"/><path d="M7 7l7.600-3.200-.3 8.300L7 15.400z" fill="#8c683c" stroke="#5c4228" stroke-width=".7" stroke-linejoin="round"/></svg><span class="t" style="left:38px;letter-spacing:-0.262px;">Archive selected to 7z with parent...</span></div>
<div class="row" style="top:720px;"><svg style="left:17px;top:2px" width="16" height="16" viewBox="0 0 16 16"><radialGradient id="g133" cx="0.4" cy="0.35" r="0.7"><stop offset="0" stop-color="#c8ec70"/><stop offset="0.7" stop-color="#98d040"/><stop offset="1" stop-color="#84c030"/></radialGradient><circle cx="7.800" cy="8" r="6.400" fill="url(#g133)" stroke="#6aa820" stroke-width=".8" stroke-dasharray="1.400 .9"/><path d="M7.800 5.300v5.400M5.100 8h5.400" stroke="#28440c" stroke-width="1.900"/></svg><span class="t" style="left:38px;letter-spacing:-0.374px;">Name to Clip</span></div>
<div class="row" style="top:740px;"><svg style="left:17px;top:2px" width="16" height="16" viewBox="0 0 16 16"><radialGradient id="g135" cx="0.4" cy="0.35" r="0.7"><stop offset="0" stop-color="#c8ec70"/><stop offset="0.7" stop-color="#98d040"/><stop offset="1" stop-color="#84c030"/></radialGradient><circle cx="7.800" cy="8" r="6.400" fill="url(#g135)" stroke="#6aa820" stroke-width=".8" stroke-dasharray="1.400 .9"/><path d="M4.800 8.200l2 2 4-4.300" fill="none" stroke="#2c4c10" stroke-width="1.500"/></svg><span class="t" style="left:38px;letter-spacing:-0.252px;">Clip to Rename</span></div>
<div class="row" style="top:760px;"><svg style="left:17px;top:2px" width="16" height="16" viewBox="0 0 16 16"><linearGradient id="g137" x1="0" y1="0" x2="0" y2="1"><stop offset="0" stop-color="#ecc478"/><stop offset="1" stop-color="#dcac54"/></linearGradient><rect x="2.700" y="2.900" width="11.600" height="12.400" rx=".6" fill="url(#g137)" stroke="#7c5c2c" stroke-width=".9"/><rect x="6.300" y="1" width="4.400" height="2.700" rx=".8" fill="#c8b8b8" stroke="#7a6a6a" stroke-width=".7"/></svg><span class="t" style="left:38px;letter-spacing:-0.240px;">Clipboard to Folder</span></div>
<div class="row" style="top:780px;"><svg style="left:17px;top:2px" width="16" height="16" viewBox="0 0 16 16"><path d="M2.600 .7h11v14.600h-11z" fill="#fcfcfc" stroke="#8a8e8a" stroke-width=".9"/><path d="M9 3.500h3.300M10.500 6h1.800M10.500 8.500h1.800M9 11h3.300M4.500 13.300h7.800" stroke="#9a9e9a" stroke-width=".9"/><path d="M9.900 7.300L6 3.600v2.100H.5v3.200H6V11z" fill="#98d468" stroke="#4c9c30" stroke-width=".8" stroke-linejoin="round"/></svg><span class="t" style="left:38px;letter-spacing:-0.344px;">File List Creator</span></div>
<div class="row" style="top:800px;"><svg style="left:17px;top:2px" width="16" height="16" viewBox="0 0 16 16"><path d="M2.600 .7h11v14.600h-11z" fill="#fcfcfc" stroke="#8a8e8a" stroke-width=".9"/><path d="M9 3.500h3.300M10.500 6h1.800M10.500 8.500h1.800M9 11h3.300M4.500 13.300h7.800" stroke="#9a9e9a" stroke-width=".9"/><path d="M9.900 7.300L6 3.600v2.100H.5v3.200H6V11z" fill="#98d468" stroke="#4c9c30" stroke-width=".8" stroke-linejoin="round"/></svg><span class="t" style="left:38px;letter-spacing:-0.351px;">Create List of Files</span></div>
</div>
<div class="a" style="left:262px;top:82px;width:17px;height:812px;background:#f0f0f0"></div>
<div class="a" style="left:263px;top:101px;width:15px;height:620px;border:1px solid #989898;border-radius:2px;background:linear-gradient(90deg,#f3f3f3 0,#e9e9eb 45%,#d7d7db 55%,#cfcfd4 100%)"></div>
<div class="a" style="left:267px;top:407px;width:7px;height:1px;background:#555a60;box-shadow:0 1px 0 #fbfbfb"></div>
<div class="a" style="left:267px;top:410px;width:7px;height:1px;background:#555a60;box-shadow:0 1px 0 #fbfbfb"></div>
<div class="a" style="left:267px;top:413px;width:7px;height:1px;background:#555a60;box-shadow:0 1px 0 #fbfbfb"></div>
<svg style="left:267px;top:88.500px" width="8" height="5" viewBox="0 0 8 5"><path d="M.3 4.600L4 .6l3.700 4z" fill="#3c3c3c"/></svg>
<svg style="left:267px;top:882px" width="8" height="5" viewBox="0 0 8 5"><path d="M.3 .4L4 4.400 7.700 .4z" fill="#3c3c3c"/></svg>
<div class="a" style="left:284px;top:82px;width:962px;height:575px;background:#f0f0f0"></div>
<div class="a" style="left:284px;top:81px;width:962px;height:28px;background:linear-gradient(180deg,#e6e6e6,#f4f4f4)"></div>
<div class="a" style="left:284px;top:109px;width:962px;height:1px;background:#9a9a9a"></div>
<div class="tab" style="left:284px;top:84px;width:24px;height:25px;background:linear-gradient(180deg,#f2f2f2,#dcdce6)"></div>
<svg style="left:288px;top:89.5px" width="16" height="16" viewBox="0 0 16 16"><linearGradient id="g143" x1="0" y1="0" x2="0" y2="1"><stop offset="0" stop-color="#ffe448"/><stop offset="0.5" stop-color="#fcc418"/><stop offset="1" stop-color="#f69408"/></linearGradient><path d="M4.400 .7h7.200v6.800h3.700L8 15.300.7 7.500h3.700z" fill="url(#g143)" stroke="#e89c10" stroke-width=".9" stroke-linejoin="round"/><path d="M5.300 1.600h2v6.800H3.500z" fill="#fff8a0" opacity=".5"/></svg>
<div class="tab" style="left:437px;top:84px;width:24px;height:25px;background:linear-gradient(180deg,#f3f3f3 0,#ececec 48%,#dedede 52%,#d8d8d8 100%)"></div>
<svg style="left:445px;top:93px" width="9" height="9" viewBox="0 0 9 9"><path d="M3.700 0h1.600v3.300H3.700zM3.700 5.700h1.600V9H3.700zM0 3.700h3.300v1.600H0zM5.700 3.700H9v1.600H5.700z" fill="#7e7e7e"/><rect x="3.700" y="3.700" width="1.600" height="1.600" fill="#a8a8a8"/></svg>
<div class="tab" style="left:307px;top:81px;width:130px;height:29px;background:#fff"></div>
<svg style="left:313px;top:88px" width="16" height="16" viewBox="0 0 16 16"><linearGradient id="g145" x1="0" y1="0" x2="0" y2="1"><stop offset="0" stop-color="#fffbdc"/><stop offset="1" stop-color="#fde78c"/></linearGradient><path d="M8 .8l2.2 4.7 5 .6-3.7 3.5 1 5L8 12.100l-4.500 2.500 1-5L.8 6.100l5-.6z" fill="url(#g145)" stroke="#d9a93c" stroke-width="1.05" stroke-linejoin="round"/></svg>
<div class="t" style="left:334px;top:86px;font-weight:bold;letter-spacing:-0.1px">D: <span style="display:inline-block;transform:scaleX(1.476);transform-origin:0 50%;margin-right:9.00px;letter-spacing:0">___</span>Core</div>
<div class="a" style="left:419px;top:88px;width:12px;height:12px;background:#d0d0d0"></div>
<svg style="left:421.500px;top:90.500px" width="7" height="7" viewBox="0 0 7 7"><path d="M.8 .8l5.400 5.400M6.200 .8L.8 6.200" stroke="#fff" stroke-width="2"/></svg>
<div class="a" style="left:284px;top:110px;width:962px;height:547px;background:#fff;border-left:1px solid #bebebe;border-bottom:1px solid #a0a0a0"></div>
<div class="ch" style="top:110px;left:285px;width:961px;height:19px;line-height:19px"><div class="t" style="left:17px;top:0;">#</div><div class="t" style="left:34px;top:0;letter-spacing:-0.543px;">Name</div><div class="colsep" style="left:324px"></div><div class="t" style="left:325px;width:60px;text-align:right;top:0;letter-spacing:-0.719px;">Size</div><div class="colsep" style="left:388px"></div><div class="t" style="left:393px;top:0;letter-spacing:0.052px;">Ext</div><div class="colsep" style="left:427px"></div><div class="t" style="left:432px;top:0;letter-spacing:-0.658px;">Modified</div><div class="colsep" style="left:562px"></div><div class="t" style="left:566px;top:0;letter-spacing:0.211px;">Tags</div><div class="colsep" style="left:706px"></div><svg style="left:85px;top:6px" width="9" height="8" viewBox="0 0 9 8"><path d="M4.5 0L6.5 2.5H2.5zM1.5 4h6v1h-6zM0 6.5h9v1H0z" fill="#222"/></svg></div>
<div class="a" style="left:285px;top:130px;width:30px;height:526px;background:#bebebe"></div>
<div class="row" style="left:285px;width:961px;top:130px"><span class="num">1</span><svg style="left:33px;top:2px" width="16" height="16" viewBox="0 0 16 16"><linearGradient id="g147" x1="0" y1="0" x2="0" y2="1"><stop offset="0" stop-color="#eef4fc"/><stop offset="1" stop-color="#b8d0f0"/></linearGradient><path d="M.5 6.800l1.800-3 3.200-1.300 1.300 1.200L10 1l5.600 4-2.600 2z" fill="#dbe7f6" stroke="#a2bcdc" stroke-width=".8" stroke-linejoin="round"/><path d="M3.300 5.600l6.500-3.200 4 3-5.800 3.400z" fill="#fff" stroke="#c0d0e6" stroke-width=".6" stroke-linejoin="round"/><path d="M.4 7.300l11-1.700 4.400.5-3.300 6.500L1.200 15.400z" fill="url(#g147)" stroke="#92b0d8" stroke-width=".8" stroke-linejoin="round"/></svg><span class="t" style="left:53px;letter-spacing:-0.143px;">Apps</span><span class="a" style="left:50px;top:0;width:38px;height:20px;border:1px dotted #000"></span><span class="t" style="left:432px;color:#111;letter-spacing:0.085px;">2013-09-04 08:5...</span></div>
<div class="row" style="left:285px;width:961px;top:150px"><span class="num">2</span><svg style="left:33px;top:2px" width="16" height="16" viewBox="0 0 16 16"><linearGradient id="g149" x1="0" y1="0" x2="0" y2="1"><stop offset="0" stop-color="#eef4fc"/><stop offset="1" stop-color="#b8d0f0"/></linearGradient><path d="M.5 6.800l1.800-3 3.200-1.300 1.300 1.200L10 1l5.600 4-2.600 2z" fill="#dbe7f6" stroke="#a2bcdc" stroke-width=".8" stroke-linejoin="round"/><path d="M3.300 5.600l6.500-3.200 4 3-5.800 3.400z" fill="#fff" stroke="#c0d0e6" stroke-width=".6" stroke-linejoin="round"/><path d="M.4 7.300l11-1.700 4.400.5-3.300 6.500L1.200 15.400z" fill="url(#g149)" stroke="#92b0d8" stroke-width=".8" stroke-linejoin="round"/></svg><span class="t" style="left:53px;letter-spacing:0.323px;">CLI</span><span class="t" style="left:432px;color:#111;letter-spacing:0.085px;">2013-06-21 11:0...</span></div>
<div class="row" style="left:285px;width:961px;top:170px"><span class="num">3</span><svg style="left:33px;top:2px" width="16" height="16" viewBox="0 0 16 16"><linearGradient id="g151" x1="0" y1="0" x2="0" y2="1"><stop offset="0" stop-color="#eef4fc"/><stop offset="1" stop-color="#b8d0f0"/></linearGradient><path d="M.5 6.800l1.800-3 3.200-1.300 1.300 1.200L10 1l5.600 4-2.600 2z" fill="#dbe7f6" stroke="#a2bcdc" stroke-width=".8" stroke-linejoin="round"/><path d="M3.300 5.600l6.500-3.200 4 3-5.800 3.400z" fill="#fff" stroke="#c0d0e6" stroke-width=".6" stroke-linejoin="round"/><path d="M.4 7.300l11-1.700 4.400.5-3.300 6.500L1.200 15.400z" fill="url(#g151)" stroke="#92b0d8" stroke-width=".8" stroke-linejoin="round"/></svg><span class="t" style="left:53px;letter-spacing:0.072px;">Connect</span><span class="t" style="left:432px;color:#111;letter-spacing:0.085px;">2013-02-21 09:0...</span></div>
<div class="row" style="left:285px;width:961px;top:190px"><span class="num">4</span><svg style="left:33px;top:2px" width="16" height="16" viewBox="0 0 16 16"><linearGradient id="g153" x1="0" y1="0" x2="0" y2="1"><stop offset="0" stop-color="#eef4fc"/><stop offset="1" stop-color="#b8d0f0"/></linearGradient><path d="M.5 6.800l1.800-3 3.200-1.300 1.300 1.200L10 1l5.600 4-2.600 2z" fill="#dbe7f6" stroke="#a2bcdc" stroke-width=".8" stroke-linejoin="round"/><path d="M3.300 5.600l6.500-3.200 4 3-5.800 3.400z" fill="#fff" stroke="#c0d0e6" stroke-width=".6" stroke-linejoin="round"/><path d="M.4 7.300l11-1.700 4.400.5-3.300 6.500L1.200 15.400z" fill="url(#g153)" stroke="#92b0d8" stroke-width=".8" stroke-linejoin="round"/></svg><span class="a" style="left:50px;top:0;width:52px;height:20px;background:#e2e2e2"></span><span class="t" style="left:53px;color:#1c1cc4;letter-spacing:-0.382px;">Differs</span><span class="t" style="left:432px;color:#111;letter-spacing:0.085px;">2013-10-02 09:1...</span></div>
<div class="row" style="left:285px;width:961px;top:210px"><span class="num">5</span><svg style="left:33px;top:2px" width="16" height="16" viewBox="0 0 16 16"><linearGradient id="g155" x1="0" y1="0" x2="0" y2="1"><stop offset="0" stop-color="#eef4fc"/><stop offset="1" stop-color="#b8d0f0"/></linearGradient><path d="M.5 6.800l1.800-3 3.200-1.300 1.300 1.200L10 1l5.600 4-2.600 2z" fill="#dbe7f6" stroke="#a2bcdc" stroke-width=".8" stroke-linejoin="round"/><path d="M3.300 5.600l6.500-3.200 4 3-5.800 3.400z" fill="#fff" stroke="#c0d0e6" stroke-width=".6" stroke-linejoin="round"/><path d="M.4 7.300l11-1.700 4.400.5-3.300 6.500L1.200 15.400z" fill="url(#g155)" stroke="#92b0d8" stroke-width=".8" stroke-linejoin="round"/></svg><span class="t" style="left:53px;letter-spacing:-0.178px;">Editors</span><span class="t" style="left:432px;color:#111;letter-spacing:0.085px;">2013-10-01 07:2...</span></div>
<div class="row" style="left:285px;width:961px;top:230px"><span class="num">6</span><svg style="left:33px;top:2px" width="16" height="16" viewBox="0 0 16 16"><linearGradient id="g157" x1="0" y1="0" x2="0" y2="1"><stop offset="0" stop-color="#eef4fc"/><stop offset="1" stop-color="#b8d0f0"/></linearGradient><path d="M.5 6.800l1.800-3 3.200-1.300 1.300 1.200L10 1l5.600 4-2.600 2z" fill="#dbe7f6" stroke="#a2bcdc" stroke-width=".8" stroke-linejoin="round"/><path d="M3.300 5.600l6.500-3.200 4 3-5.800 3.400z" fill="#fff" stroke="#c0d0e6" stroke-width=".6" stroke-linejoin="round"/><path d="M.4 7.300l11-1.700 4.400.5-3.300 6.500L1.200 15.400z" fill="url(#g157)" stroke="#92b0d8" stroke-width=".8" stroke-linejoin="round"/></svg><span class="t" style="left:53px;letter-spacing:-0.621px;">File</span><span class="t" style="left:432px;color:#111;letter-spacing:0.085px;">2013-09-03 11:1...</span></div>
<div class="row" style="left:285px;width:961px;top:250px"><span class="num">7</span><svg style="left:33px;top:2px" width="16" height="16" viewBox="0 0 16 16"><linearGradient id="g159" x1="0" y1="0" x2="0" y2="1"><stop offset="0" stop-color="#eef4fc"/><stop offset="1" stop-color="#b8d0f0"/></linearGradient><path d="M.5 6.800l1.800-3 3.200-1.300 1.300 1.200L10 1l5.600 4-2.600 2z" fill="#dbe7f6" stroke="#a2bcdc" stroke-width=".8" stroke-linejoin="round"/><path d="M3.300 5.600l6.500-3.200 4 3-5.800 3.400z" fill="#fff" stroke="#c0d0e6" stroke-width=".6" stroke-linejoin="round"/><path d="M.4 7.300l11-1.700 4.400.5-3.300 6.500L1.200 15.400z" fill="url(#g159)" stroke="#92b0d8" stroke-width=".8" stroke-linejoin="round"/></svg><span class="t" style="left:53px;letter-spacing:-0.378px;">Graphics</span><span class="t" style="left:432px;color:#111;letter-spacing:0.085px;">2013-09-27 02:5...</span></div>
<div class="row" style="left:285px;width:961px;top:270px"><span class="num">8</span><svg style="left:33px;top:2px" width="16" height="16" viewBox="0 0 16 16"><linearGradient id="g161" x1="0" y1="0" x2="0" y2="1"><stop offset="0" stop-color="#eef4fc"/><stop offset="1" stop-color="#b8d0f0"/></linearGradient><path d="M.5 6.800l1.800-3 3.200-1.300 1.300 1.200L10 1l5.600 4-2.600 2z" fill="#dbe7f6" stroke="#a2bcdc" stroke-width=".8" stroke-linejoin="round"/><path d="M3.300 5.600l6.500-3.200 4 3-5.800 3.400z" fill="#fff" stroke="#c0d0e6" stroke-width=".6" stroke-linejoin="round"/><path d="M.4 7.300l11-1.700 4.400.5-3.300 6.500L1.200 15.400z" fill="url(#g161)" stroke="#92b0d8" stroke-width=".8" stroke-linejoin="round"/></svg><span class="t" style="left:53px;letter-spacing:0.102px;">Icons</span><span class="t" style="left:432px;color:#111;letter-spacing:0.085px;">2013-08-01 12:5...</span></div>
<div class="row" style="left:285px;width:961px;top:290px"><span class="num">9</span><svg style="left:33px;top:2px" width="16" height="16" viewBox="0 0 16 16"><linearGradient id="g163" x1="0" y1="0" x2="0" y2="1"><stop offset="0" stop-color="#ffe868"/><stop offset="1" stop-color="#fccc30"/></linearGradient><path d="M3.200 1.600h9.500v13.200H3.200z" fill="url(#g163)" stroke="#e4a81c" stroke-width="1"/><path d="M4.800 4.300h4.500M4.800 6.800h2.500M4.800 12.500h6" stroke="#e8b838" stroke-width="1"/><path d="M5.800 11.500l1-2.700 6.600-6.900 1.800 1.700-6.700 7z" fill="#f8dcb0" stroke="#b8602a" stroke-width=".8" stroke-linejoin="round"/><path d="M12.500 2.800l1.500-1.600 1.800 1.800-1.500 1.600z" fill="#d83444"/><path d="M5.800 11.500l.5-1.400.9.900z" fill="#333"/></svg><span class="t" style="left:53px;letter-spacing:-0.215px;">Notes</span><span class="t" style="left:432px;color:#111;letter-spacing:0.085px;">2013-06-26 10:5...</span></div>
<div class="row" style="left:285px;width:961px;top:310px"><span class="num">10</span><svg style="left:33px;top:2px" width="16" height="16" viewBox="0 0 16 16"><linearGradient id="g165" x1="0" y1="0" x2="0" y2="1"><stop offset="0" stop-color="#eef4fc"/><stop offset="1" stop-color="#b8d0f0"/></linearGradient><path d="M.5 6.800l1.800-3 3.200-1.300 1.300 1.200L10 1l5.600 4-2.600 2z" fill="#dbe7f6" stroke="#a2bcdc" stroke-width=".8" stroke-linejoin="round"/><path d="M3.300 5.600l6.500-3.200 4 3-5.800 3.400z" fill="#fff" stroke="#c0d0e6" stroke-width=".6" stroke-linejoin="round"/><path d="M.4 7.300l11-1.700 4.400.5-3.300 6.500L1.200 15.400z" fill="url(#g165)" stroke="#92b0d8" stroke-width=".8" stroke-linejoin="round"/></svg><span class="t" style="left:53px;letter-spacing:-0.242px;">Search</span><span class="t" style="left:432px;color:#111;letter-spacing:0.085px;">2013-06-28 09:0...</span></div>
<div class="row" style="left:285px;width:961px;top:330px"><span class="num">11</span><svg style="left:33px;top:2px" width="16" height="16" viewBox="0 0 16 16"><linearGradient id="g167" x1="0" y1="0" x2="0" y2="1"><stop offset="0" stop-color="#eef4fc"/><stop offset="1" stop-color="#b8d0f0"/></linearGradient><path d="M.5 6.800l1.800-3 3.200-1.300 1.300 1.200L10 1l5.600 4-2.600 2z" fill="#dbe7f6" stroke="#a2bcdc" stroke-width=".8" stroke-linejoin="round"/><path d="M3.300 5.600l6.500-3.200 4 3-5.800 3.400z" fill="#fff" stroke="#c0d0e6" stroke-width=".6" stroke-linejoin="round"/><path d="M.4 7.300l11-1.700 4.400.5-3.300 6.500L1.200 15.400z" fill="url(#g167)" stroke="#92b0d8" stroke-width=".8" stroke-linejoin="round"/></svg><span class="t" style="left:53px;letter-spacing:-0.267px;">Security</span><span class="t" style="left:432px;color:#111;letter-spacing:0.085px;">2013-05-10 01:1...</span></div>
<div class="row" style="left:285px;width:961px;top:350px"><span class="num">12</span><svg style="left:33px;top:2px" width="16" height="16" viewBox="0 0 16 16"><linearGradient id="g169" x1="0" y1="0" x2="0" y2="1"><stop offset="0" stop-color="#eef4fc"/><stop offset="1" stop-color="#b8d0f0"/></linearGradient><path d="M.5 6.800l1.800-3 3.200-1.300 1.300 1.200L10 1l5.600 4-2.600 2z" fill="#dbe7f6" stroke="#a2bcdc" stroke-width=".8" stroke-linejoin="round"/><path d="M3.300 5.600l6.500-3.200 4 3-5.800 3.400z" fill="#fff" stroke="#c0d0e6" stroke-width=".6" stroke-linejoin="round"/><path d="M.4 7.300l11-1.700 4.400.5-3.300 6.500L1.200 15.400z" fill="url(#g169)" stroke="#92b0d8" stroke-width=".8" stroke-linejoin="round"/></svg><span class="a" style="left:50px;top:0;width:46px;height:20px;background:#e2e2e2"></span><span class="t" style="left:53px;color:#1c1cc4;letter-spacing:0.401px;">Tools</span><span class="t" style="left:432px;color:#111;letter-spacing:0.085px;">2013-10-02 09:1...</span></div>
<div class="row" style="left:285px;width:961px;top:370px"><span class="num">13</span><svg style="left:33px;top:2px" width="16" height="16" viewBox="0 0 16 16"><linearGradient id="g171" x1="0" y1="0" x2="0" y2="1"><stop offset="0" stop-color="#eef4fc"/><stop offset="1" stop-color="#b8d0f0"/></linearGradient><path d="M.5 6.800l1.800-3 3.200-1.300 1.300 1.200L10 1l5.600 4-2.600 2z" fill="#dbe7f6" stroke="#a2bcdc" stroke-width=".8" stroke-linejoin="round"/><path d="M3.300 5.600l6.500-3.200 4 3-5.800 3.400z" fill="#fff" stroke="#c0d0e6" stroke-width=".6" stroke-linejoin="round"/><path d="M.4 7.300l11-1.700 4.400.5-3.300 6.500L1.200 15.400z" fill="url(#g171)" stroke="#92b0d8" stroke-width=".8" stroke-linejoin="round"/></svg><span class="t" style="left:53px;letter-spacing:-0.647px;">Utils</span><span class="t" style="left:432px;color:#111;letter-spacing:0.085px;">2013-09-30 07:5...</span></div>
<div class="a" style="left:284px;top:657px;width:962px;height:31px;background:#f0f0f0"></div>
<div class="a" style="left:284px;top:687px;width:962px;height:1px;background:#b0b0b0"></div>
<div class="tab" style="left:284px;top:663px;width:24px;height:25px;background:linear-gradient(180deg,#f4f4f4,#e0e0e2)"></div>
<svg style="left:288px;top:668px" width="16" height="16" viewBox="0 0 16 16"><linearGradient id="g173" x1="0" y1="0" x2="1" y2="1"><stop offset="0" stop-color="#2474bc"/><stop offset="1" stop-color="#62b0ea"/></linearGradient><path d="M2.800 1h13l-2.700 13.600H0z" fill="url(#g173)" stroke="#8ec0ea" stroke-width="1" stroke-linejoin="round"/><path d="M2.800 1h13l-2.700 13.600H0z" fill="none" stroke="#3a7cc0" stroke-width=".4" stroke-linejoin="round"/><path d="M5 4l4 3.600L4 11.500" fill="none" stroke="#fff" stroke-width="1.600" stroke-linejoin="round" stroke-linecap="round"/><path d="M8.300 11.800h3.700" stroke="#fff" stroke-width="1.600"/></svg>
<div class="tab" style="left:334px;top:663px;width:25px;height:25px;background:linear-gradient(180deg,#f3f3f3 0,#ececec 48%,#dedede 52%,#d8d8d8 100%)"></div>
<svg style="left:342px;top:672px" width="9" height="9" viewBox="0 0 9 9"><path d="M3.700 0h1.600v3.300H3.700zM3.700 5.700h1.600V9H3.700zM0 3.700h3.300v1.600H0zM5.700 3.700H9v1.600H5.700z" fill="#7e7e7e"/><rect x="3.700" y="3.700" width="1.600" height="1.600" fill="#a8a8a8"/></svg>
<div class="tab" style="left:307px;top:660px;width:27px;height:29px;background:linear-gradient(180deg,#f2f2f2,#e6e6e6)"></div>
<svg style="left:313px;top:667px" width="16" height="16" viewBox="0 0 16 16"><linearGradient id="g175" x1="0" y1="0" x2="0" y2="1"><stop offset="0" stop-color="#eef4fc"/><stop offset="1" stop-color="#b8d0f0"/></linearGradient><path d="M.5 6.800l1.800-3 3.200-1.300 1.300 1.200L10 1l5.600 4-2.600 2z" fill="#dbe7f6" stroke="#a2bcdc" stroke-width=".8" stroke-linejoin="round"/><path d="M3.300 5.600l6.500-3.200 4 3-5.800 3.400z" fill="#fff" stroke="#c0d0e6" stroke-width=".6" stroke-linejoin="round"/><path d="M.4 7.300l11-1.700 4.400.5-3.300 6.500L1.200 15.400z" fill="url(#g175)" stroke="#92b0d8" stroke-width=".8" stroke-linejoin="round"/></svg>
<div class="a" style="left:284px;top:688px;width:962px;height:183px;background:#eeeeee;border-left:1px solid #bebebe"></div>
<div class="a" style="left:284px;top:871px;width:962px;height:1px;background:#cfcfcf"></div>
<div class="a" style="left:284px;top:872px;width:962px;height:1px;background:#fdfdfd"></div>
<div class="ch" style="top:688px;left:285px;width:944px;height:20px;line-height:20px"><div class="t" style="left:17px;top:0;">#</div><div class="t" style="left:34px;top:0;letter-spacing:-0.543px;">Name</div><div class="colsep" style="left:503px"></div><div class="t" style="left:505px;width:60px;text-align:right;top:0;letter-spacing:-0.719px;">Size</div><div class="colsep" style="left:568px"></div><div class="t" style="left:572px;top:0;letter-spacing:0.052px;">Ext</div><div class="colsep" style="left:606px"></div><div class="t" style="left:611px;top:0;letter-spacing:-0.658px;">Modified</div><div class="colsep" style="left:739px"></div><div class="t" style="left:745px;top:0;letter-spacing:0.211px;">Tags</div><div class="colsep" style="left:789px"></div><svg style="left:85px;top:6px" width="9" height="8" viewBox="0 0 9 8"><path d="M4.5 0L6.5 2.5H2.5zM1.5 4h6v1h-6zM0 6.5h9v1H0z" fill="#222"/></svg></div>
<div class="a" style="left:285px;top:709px;width:30px;height:162px;background:#bebebe"></div>
<div class="row" style="left:285px;width:944px;top:709px;color:#1c1cc4"><span class="num">16</span><svg style="left:33px;top:2px" width="16" height="16" viewBox="0 0 16 16"><linearGradient id="g177" x1="0" y1="0" x2="0" y2="1"><stop offset="0" stop-color="#2a7cb4"/><stop offset="0.28" stop-color="#8cccea"/><stop offset="0.45" stop-color="#e4f8fc"/><stop offset="0.62" stop-color="#3a8494"/><stop offset="1" stop-color="#1c5868"/></linearGradient><rect x=".5" y="2.700" width="15" height="12.700" fill="#fdfdfd" stroke="#8c8c94" stroke-width=".9"/><rect x="2.300" y="4.300" width="11.400" height="9.600" fill="url(#g177)"/><path d="M3.200 6.300c3-.8 6.500.2 10.500 2.400V7.200C10.500 5.300 7 4.600 3.600 5z" fill="#f2fdff" opacity=".85"/><path d="M2.300 8.200c3 .6 6 2.300 11.400 2.800v1.200H2.300z" fill="#1c4a3c"/><path d="M2.300 12.900h11.400" stroke="#9ed0dc" stroke-width=".5"/></svg><span class="t" style="left:53px;letter-spacing:-0.078px;">Abstract_Artistic_117163.jpg</span><span class="t" style="left:485px;width:80px;text-align:right;letter-spacing:-0.062px;">204.48...</span><span class="t" style="left:572px;letter-spacing:0.167px;">jpg</span><span class="t" style="left:611px;letter-spacing:0.085px;">2013-04-10 02:4...</span></div>
<div class="row" style="left:285px;width:944px;top:729px;color:#1c1cc4"><span class="num">17</span><svg style="left:33px;top:2px" width="16" height="16" viewBox="0 0 16 16"><linearGradient id="g179" x1="0" y1="0" x2="0" y2="1"><stop offset="0" stop-color="#2a7cb4"/><stop offset="0.28" stop-color="#8cccea"/><stop offset="0.45" stop-color="#e4f8fc"/><stop offset="0.62" stop-color="#3a8494"/><stop offset="1" stop-color="#1c5868"/></linearGradient><rect x=".5" y="2.700" width="15" height="12.700" fill="#fdfdfd" stroke="#8c8c94" stroke-width=".9"/><rect x="2.300" y="4.300" width="11.400" height="9.600" fill="url(#g179)"/><path d="M3.200 6.300c3-.8 6.500.2 10.500 2.400V7.200C10.500 5.300 7 4.600 3.600 5z" fill="#f2fdff" opacity=".85"/><path d="M2.300 8.200c3 .6 6 2.300 11.400 2.800v1.200H2.300z" fill="#1c4a3c"/><path d="M2.300 12.900h11.400" stroke="#9ed0dc" stroke-width=".5"/></svg><span class="t" style="left:53px;letter-spacing:-0.078px;">Abstract_Artistic_117165.jpg</span><span class="t" style="left:485px;width:80px;text-align:right;letter-spacing:-0.062px;">186.38...</span><span class="t" style="left:572px;letter-spacing:0.167px;">jpg</span><span class="t" style="left:611px;letter-spacing:0.085px;">2013-04-10 02:4...</span></div>
<div class="row" style="left:285px;width:944px;top:749px;color:#1c1cc4"><span class="num">18</span><svg style="left:33px;top:2px" width="16" height="16" viewBox="0 0 16 16"><linearGradient id="g181" x1="0" y1="0" x2="0" y2="1"><stop offset="0" stop-color="#2a7cb4"/><stop offset="0.28" stop-color="#8cccea"/><stop offset="0.45" stop-color="#e4f8fc"/><stop offset="0.62" stop-color="#3a8494"/><stop offset="1" stop-color="#1c5868"/></linearGradient><rect x=".5" y="2.700" width="15" height="12.700" fill="#fdfdfd" stroke="#8c8c94" stroke-width=".9"/><rect x="2.300" y="4.300" width="11.400" height="9.600" fill="url(#g181)"/><path d="M3.200 6.300c3-.8 6.500.2 10.500 2.400V7.200C10.500 5.300 7 4.600 3.600 5z" fill="#f2fdff" opacity=".85"/><path d="M2.300 8.200c3 .6 6 2.300 11.400 2.800v1.200H2.300z" fill="#1c4a3c"/><path d="M2.300 12.900h11.400" stroke="#9ed0dc" stroke-width=".5"/></svg><span class="t" style="left:53px;letter-spacing:-0.078px;">Abstract_Artistic_165853.jpg</span><span class="t" style="left:485px;width:80px;text-align:right;letter-spacing:-0.062px;">411.33...</span><span class="t" style="left:572px;letter-spacing:0.167px;">jpg</span><span class="t" style="left:611px;letter-spacing:0.085px;">2013-04-10 02:4...</span></div>
<div class="row" style="left:285px;width:944px;top:769px;color:#1c1cc4"><span class="num">19</span><svg style="left:33px;top:2px" width="16" height="16" viewBox="0 0 16 16"><linearGradient id="g183" x1="0" y1="0" x2="0" y2="1"><stop offset="0" stop-color="#2a7cb4"/><stop offset="0.28" stop-color="#8cccea"/><stop offset="0.45" stop-color="#e4f8fc"/><stop offset="0.62" stop-color="#3a8494"/><stop offset="1" stop-color="#1c5868"/></linearGradient><rect x=".5" y="2.700" width="15" height="12.700" fill="#fdfdfd" stroke="#8c8c94" stroke-width=".9"/><rect x="2.300" y="4.300" width="11.400" height="9.600" fill="url(#g183)"/><path d="M3.200 6.300c3-.8 6.500.2 10.500 2.400V7.200C10.500 5.300 7 4.600 3.600 5z" fill="#f2fdff" opacity=".85"/><path d="M2.300 8.200c3 .6 6 2.300 11.400 2.800v1.200H2.300z" fill="#1c4a3c"/><path d="M2.300 12.900h11.400" stroke="#9ed0dc" stroke-width=".5"/></svg><span class="t" style="left:53px;letter-spacing:-0.078px;">Abstract_Artistic_212242.jpg</span><span class="t" style="left:485px;width:80px;text-align:right;letter-spacing:-0.292px;">2.66 MB</span><span class="t" style="left:572px;letter-spacing:0.167px;">jpg</span><span class="t" style="left:611px;letter-spacing:0.085px;">2013-04-10 02:4...</span></div>
<div class="row" style="left:285px;width:944px;top:789px;color:#1c1cc4"><span class="num">20</span><svg style="left:33px;top:2px" width="16" height="16" viewBox="0 0 16 16"><linearGradient id="g185" x1="0" y1="0" x2="0" y2="1"><stop offset="0" stop-color="#2a7cb4"/><stop offset="0.28" stop-color="#8cccea"/><stop offset="0.45" stop-color="#e4f8fc"/><stop offset="0.62" stop-color="#3a8494"/><stop offset="1" stop-color="#1c5868"/></linearGradient><rect x=".5" y="2.700" width="15" height="12.700" fill="#fdfdfd" stroke="#8c8c94" stroke-width=".9"/><rect x="2.300" y="4.300" width="11.400" height="9.600" fill="url(#g185)"/><path d="M3.200 6.300c3-.8 6.500.2 10.500 2.400V7.200C10.500 5.300 7 4.600 3.600 5z" fill="#f2fdff" opacity=".85"/><path d="M2.300 8.200c3 .6 6 2.300 11.400 2.800v1.200H2.300z" fill="#1c4a3c"/><path d="M2.300 12.900h11.400" stroke="#9ed0dc" stroke-width=".5"/></svg><span class="t" style="left:53px;letter-spacing:-0.078px;">Abstract_Artistic_212842.jpg</span><span class="t" style="left:485px;width:80px;text-align:right;letter-spacing:-0.292px;">3.29 MB</span><span class="t" style="left:572px;letter-spacing:0.167px;">jpg</span><span class="t" style="left:611px;letter-spacing:0.085px;">2013-04-10 02:4...</span></div>
<div class="row" style="left:285px;width:944px;top:809px;color:#1c1cc4"><span class="num">21</span><svg style="left:33px;top:2px" width="16" height="16" viewBox="0 0 16 16"><linearGradient id="g187" x1="0" y1="0" x2="0" y2="1"><stop offset="0" stop-color="#2a7cb4"/><stop offset="0.28" stop-color="#8cccea"/><stop offset="0.45" stop-color="#e4f8fc"/><stop offset="0.62" stop-color="#3a8494"/><stop offset="1" stop-color="#1c5868"/></linearGradient><rect x=".5" y="2.700" width="15" height="12.700" fill="#fdfdfd" stroke="#8c8c94" stroke-width=".9"/><rect x="2.300" y="4.300" width="11.400" height="9.600" fill="url(#g187)"/><path d="M3.200 6.300c3-.8 6.500.2 10.500 2.400V7.200C10.500 5.300 7 4.600 3.600 5z" fill="#f2fdff" opacity=".85"/><path d="M2.300 8.200c3 .6 6 2.300 11.400 2.800v1.200H2.300z" fill="#1c4a3c"/><path d="M2.300 12.900h11.400" stroke="#9ed0dc" stroke-width=".5"/></svg><span class="t" style="left:53px;letter-spacing:-0.078px;">Abstract_Artistic_311808.jpg</span><span class="t" style="left:485px;width:80px;text-align:right;letter-spacing:-0.062px;">913.94...</span><span class="t" style="left:572px;letter-spacing:0.167px;">jpg</span><span class="t" style="left:611px;letter-spacing:0.085px;">2013-04-10 02:4...</span></div>
<div class="row" style="left:285px;width:944px;top:829px;color:#1c1cc4"><span class="num">22</span><svg style="left:33px;top:2px" width="16" height="16" viewBox="0 0 16 16"><linearGradient id="g189" x1="0" y1="0" x2="0" y2="1"><stop offset="0" stop-color="#2a7cb4"/><stop offset="0.28" stop-color="#8cccea"/><stop offset="0.45" stop-color="#e4f8fc"/><stop offset="0.62" stop-color="#3a8494"/><stop offset="1" stop-color="#1c5868"/></linearGradient><rect x=".5" y="2.700" width="15" height="12.700" fill="#fdfdfd" stroke="#8c8c94" stroke-width=".9"/><rect x="2.300" y="4.300" width="11.400" height="9.600" fill="url(#g189)"/><path d="M3.200 6.300c3-.8 6.500.2 10.500 2.400V7.200C10.500 5.300 7 4.600 3.600 5z" fill="#f2fdff" opacity=".85"/><path d="M2.300 8.200c3 .6 6 2.300 11.400 2.800v1.200H2.300z" fill="#1c4a3c"/><path d="M2.300 12.900h11.400" stroke="#9ed0dc" stroke-width=".5"/></svg><span class="t" style="left:53px;letter-spacing:-0.078px;">Abstract_Artistic_316780.jpg</span><span class="t" style="left:485px;width:80px;text-align:right;letter-spacing:-0.062px;">366.47...</span><span class="t" style="left:572px;letter-spacing:0.167px;">jpg</span><span class="t" style="left:611px;letter-spacing:0.085px;">2013-04-10 02:3...</span></div>
<div class="row" style="left:285px;width:944px;top:849px;color:#1c1cc4"><span class="num">23</span><svg style="left:33px;top:2px" width="16" height="16" viewBox="0 0 16 16"><linearGradient id="g191" x1="0" y1="0" x2="0" y2="1"><stop offset="0" stop-color="#2a7cb4"/><stop offset="0.28" stop-color="#8cccea"/><stop offset="0.45" stop-color="#e4f8fc"/><stop offset="0.62" stop-color="#3a8494"/><stop offset="1" stop-color="#1c5868"/></linearGradient><rect x=".5" y="2.700" width="15" height="12.700" fill="#fdfdfd" stroke="#8c8c94" stroke-width=".9"/><rect x="2.300" y="4.300" width="11.400" height="9.600" fill="url(#g191)"/><path d="M3.200 6.300c3-.8 6.500.2 10.500 2.400V7.200C10.500 5.300 7 4.600 3.600 5z" fill="#f2fdff" opacity=".85"/><path d="M2.300 8.200c3 .6 6 2.300 11.400 2.800v1.200H2.300z" fill="#1c4a3c"/><path d="M2.300 12.900h11.400" stroke="#9ed0dc" stroke-width=".5"/></svg><span class="t" style="left:53px;letter-spacing:-0.078px;">Abstract_Artistic_316788.jpg</span><span class="t" style="left:485px;width:80px;text-align:right;letter-spacing:-0.062px;">362.09...</span><span class="t" style="left:572px;letter-spacing:0.167px;">jpg</span><span class="t" style="left:611px;letter-spacing:0.085px;">2013-04-10 02:3...</span></div>
<div class="a" style="left:1229px;top:688px;width:17px;height:183px;background:#f1f1f1;border-left:1px solid #e6e6e6"></div>
<svg style="left:1234px;top:696px" width="8" height="5" viewBox="0 0 8 5"><path d="M.3 4.600L4 .6l3.700 4z" fill="#3c3c3c"/></svg>
<svg style="left:1234px;top:860.500px" width="8" height="5" viewBox="0 0 8 5"><path d="M.3 .4L4 4.400 7.700 .4z" fill="#3c3c3c"/></svg>
<div class="a" style="left:1230px;top:717px;width:15px;height:16px;border:1px solid #989898;border-radius:2px;background:linear-gradient(90deg,#f3f3f3 0,#e9e9eb 45%,#d7d7db 55%,#cfcfd4 100%)"></div>
<div class="a" style="left:284px;top:873px;width:962px;height:21px;background:#f4f4f4"></div>
<div class="st" style="left:285px;top:873px;letter-spacing:-0.228px;">13 items (14.89 GB free)</div>
<div class="a" style="left:486px;top:875px;width:1px;height:17px;background:#b8b8b8;box-shadow:1px 0 0 #fff"></div>
<div class="st" style="left:491px;top:873px;letter-spacing:-0.198px;">total: 0 bytes</div>
<div class="a" style="left:760px;top:875px;width:1px;height:17px;background:#b8b8b8;box-shadow:1px 0 0 #fff"></div>
<svg style="left:766px;top:878px" width="16" height="16" viewBox="0 0 16 16"><linearGradient id="g193" x1="0" y1="0" x2="0" y2="1"><stop offset="0" stop-color="#fafafa"/><stop offset="1" stop-color="#c8c8c8"/></linearGradient><path d="M2.500 4.500h11l2 4v3.300h-15V8.500z" fill="url(#g193)" stroke="#808080" stroke-width=".8" stroke-linejoin="round"/><path d="M.6 8.500h14.800" stroke="#9a9a9a" stroke-width=".7"/><rect x="11" y="9.500" width="3" height="1.400" fill="#6a6a6a"/></svg>
<div class="st" style="left:786px;top:873px;letter-spacing:-0.255px;">drive D:  105.23 GB used   14.89 GB free (12%)</div>
<div class="a" style="left:1201px;top:875px;width:1px;height:17px;background:#b8b8b8;box-shadow:1px 0 0 #fff"></div>
<svg style="left:1205px;top:875px" width="16" height="16" viewBox="0 0 16 16"><radialGradient id="g195" cx="0.4" cy="0.35" r="0.7"><stop offset="0" stop-color="#90dc80"/><stop offset="0.7" stop-color="#68c45c"/><stop offset="1" stop-color="#54b44a"/></radialGradient><circle cx="8" cy="8" r="6.700" fill="url(#g195)" stroke="#3f9f3c" stroke-width="1"/><path d="M4.800 8.300l2.300 2.300 4.200-4.700" fill="none" stroke="#fff" stroke-width="1.900"/></svg>
<svg style="left:1228px;top:876px" width="16" height="16" viewBox="0 0 16 16"><linearGradient id="g197" x1="0" y1="0" x2="0" y2="1"><stop offset="0" stop-color="#3a84dc"/><stop offset="1" stop-color="#2468c8"/></linearGradient><rect x="0" y="2" width="14" height="11" fill="url(#g197)"/><path d="M3.200 9.500L7 5.700l3.800 3.800" fill="none" stroke="#c8f0ff" stroke-width="2"/></svg>
</div>
</body></html>
